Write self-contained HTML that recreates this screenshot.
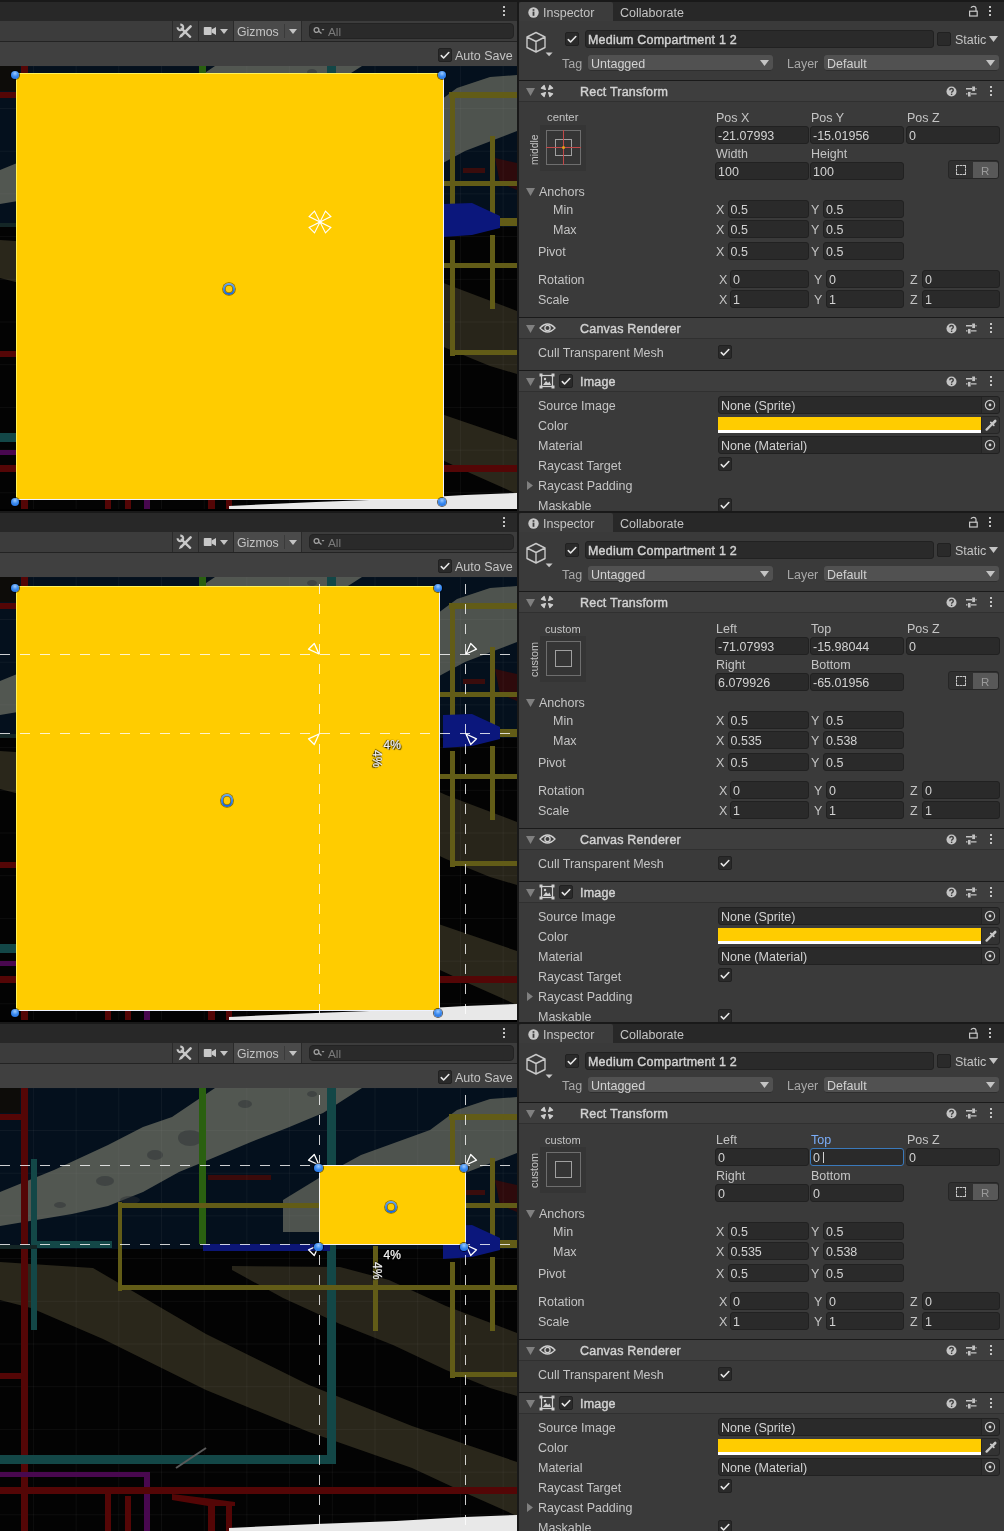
<!DOCTYPE html>
<html><head><meta charset="utf-8"><style>
html,body{margin:0;padding:0;width:1004px;height:1531px;overflow:hidden;background:#191919}
.p{position:absolute;left:0;width:1004px;height:511px;overflow:hidden;will-change:transform;background:#191919}
.r{position:absolute}
.t{position:absolute;white-space:nowrap;font-family:"Liberation Sans",sans-serif;line-height:normal}
</style></head><body>
<div class="p" style="top:0px"><div class="r" style="left:0px;top:0px;width:1004px;height:2px;background:#191919;"></div><div class="r" style="left:0px;top:2px;width:517px;height:19px;background:#282828;"></div><div class="r" style="left:502.8px;top:6.0px;width:2.3px;height:2.3px;background:#c4c4c4;"></div><div class="r" style="left:502.8px;top:9.9px;width:2.3px;height:2.3px;background:#c4c4c4;"></div><div class="r" style="left:502.8px;top:13.8px;width:2.3px;height:2.3px;background:#c4c4c4;"></div><div class="r" style="left:0px;top:21px;width:517px;height:20px;background:#3c3c3c;"></div><div class="r" style="left:0px;top:41px;width:517px;height:1px;background:#232323;"></div><div class="r" style="left:0px;top:42px;width:517px;height:24px;background:#404040;"></div><div class="r" style="left:172px;top:21px;width:1px;height:20px;background:#2a2a2a;"></div><div class="r" style="left:198px;top:21px;width:1px;height:20px;background:#2a2a2a;"></div><div class="r" style="left:233px;top:21px;width:1px;height:20px;background:#2a2a2a;"></div><div class="r" style="left:234px;top:21px;width:67px;height:20px;background:#4a4a4a;"></div><div class="r" style="left:284px;top:24px;width:1px;height:14px;background:#3a3a3a;"></div><div class="r" style="left:301px;top:21px;width:1px;height:20px;background:#2a2a2a;"></div><svg class="r" style="left:176px;top:23px" width="17" height="16" viewBox="0 0 17 16"><path d="M5.6 5.6 L14.2 13.8" stroke="#c8c8c8" stroke-width="2.3" stroke-linecap="round"/><path d="M4.3 1.6 A2.8 2.8 0 1 1 1.6 4.3" fill="none" stroke="#c8c8c8" stroke-width="2.1"/><path d="M14.6 3.4 L5.4 12.6" stroke="#c8c8c8" stroke-width="2.6" stroke-linecap="round"/><path d="M4.3 11.5 L6.5 13.7 L2.7 15.2 Z" fill="#c8c8c8"/></svg><svg class="r" style="left:203px;top:26px" width="14" height="10" viewBox="0 0 14 10"><rect x="0.8" y="1" width="7.8" height="8" rx="0.8" fill="#c8c8c8"/><path d="M8.6 3.6 L13 1 L13 9 L8.6 6.4 Z" fill="#c8c8c8"/></svg><svg class="r" style="left:220.0px;top:28.5px" width="8" height="5"><path d="M0 0 L8 0 L4.0 5 Z" fill="#c4c4c4"/></svg><div class="t" style="left:237px;top:24.87px;font-size:12.3px;color:#c4c4c4;">Gizmos</div><svg class="r" style="left:289.0px;top:28.5px" width="8" height="5"><path d="M0 0 L8 0 L4.0 5 Z" fill="#c4c4c4"/></svg><div class="r" style="left:309px;top:23px;width:205px;height:16px;background:#2a2a2a;border:1px solid #232323;box-sizing:border-box;border-radius:4px"></div><svg class="r" style="left:313px;top:26px" width="12" height="10" viewBox="0 0 12 10"><circle cx="3.5" cy="4" r="2.4" fill="none" stroke="#a0a0a0" stroke-width="1.3"/><path d="M5.5 5 L8.5 7.5" stroke="#a0a0a0" stroke-width="1.4"/><path d="M8.5 3 L11.5 3 L10 4.8 Z" fill="#a0a0a0"/></svg><div class="t" style="left:328px;top:24.82px;font-size:11.8px;color:#7a7a7a;">All</div><div class="r" style="left:438px;top:48px;width:12px;height:12px;background:#2a2a2a;border:1px solid #212121;border-radius:2px"></div><svg class="r" style="left:438px;top:48px" width="14" height="14" viewBox="0 0 14 14"><path d="M3.3 7.6 L5.6 10 L10.8 4.5" fill="none" stroke="#e6e6e6" stroke-width="1.6" stroke-linecap="round" stroke-linejoin="round"/></svg><div class="t" style="left:455px;top:48.99px;font-size:12.5px;color:#c4c4c4;">Auto Save</div><div class="r" style="left:517px;top:0px;width:2px;height:511px;background:#191919;"></div><div class="r" style="left:0;top:66px;width:517px;height:443px;overflow:hidden;background:#050709"><svg class="r" style="left:0;top:0" width="517" height="443"><rect x="0" y="0" width="517" height="443" fill="#030303" /><rect x="0" y="0" width="517" height="161" fill="#04101d" /><polygon points="0,104 54,82 108,57 143,39 172,29 215,0 362,0 323,25 287,40 251,54 201,75 179,84 143,104 108,118 72,126 0,138" fill="#525751" /><ellipse cx="105" cy="93" rx="9" ry="5" fill="#2a2f33" opacity="0.45"/><ellipse cx="155" cy="67" rx="8" ry="5" fill="#2a2f33" opacity="0.45"/><ellipse cx="190" cy="50" rx="12" ry="8" fill="#2a2f33" opacity="0.45"/><ellipse cx="245" cy="16" rx="7" ry="4" fill="#2a2f33" opacity="0.45"/><ellipse cx="60" cy="117" rx="6" ry="3" fill="#2a2f33" opacity="0.45"/><ellipse cx="130" cy="112" rx="10" ry="4" fill="#2a2f33" opacity="0.45"/><ellipse cx="312" cy="6" rx="5" ry="3" fill="#2a2f33" opacity="0.45"/><polygon points="283,144 283,112 319,90 361,67 430,42 457,22 490,11 517,9 517,65 465,85 430,104 319,144" fill="#4e534e" /><polygon points="232,178 340,179 389,192 446,218 517,245 517,308 490,300 446,282 393,257 340,236 283,210 232,182" fill="#28251a" /><polygon points="0,174 93,180 206,246 309,297 412,338 517,374 517,428 470,407 412,380 309,344 206,302 103,251 31,220 0,212" fill="#2a271b" /><rect x="463" y="102" width="22" height="5" fill="#3a0c0c" /><polygon points="495,92 517,97 517,124 500,117" fill="#2e0a0c" /><rect x="208" y="87" width="63" height="5" fill="#3a0a0a" /><line x1="33.4" y1="0" x2="33.4" y2="443" stroke="rgba(150,150,150,0.08)" stroke-width="1"/><line x1="76.1" y1="0" x2="76.1" y2="443" stroke="rgba(150,150,150,0.08)" stroke-width="1"/><line x1="118.8" y1="0" x2="118.8" y2="443" stroke="rgba(150,150,150,0.08)" stroke-width="1"/><line x1="161.5" y1="0" x2="161.5" y2="443" stroke="rgba(150,150,150,0.08)" stroke-width="1"/><line x1="204.2" y1="0" x2="204.2" y2="443" stroke="rgba(150,150,150,0.08)" stroke-width="1"/><line x1="246.9" y1="0" x2="246.9" y2="443" stroke="rgba(150,150,150,0.08)" stroke-width="1"/><line x1="289.6" y1="0" x2="289.6" y2="443" stroke="rgba(150,150,150,0.08)" stroke-width="1"/><line x1="332.3" y1="0" x2="332.3" y2="443" stroke="rgba(150,150,150,0.08)" stroke-width="1"/><line x1="375.0" y1="0" x2="375.0" y2="443" stroke="rgba(150,150,150,0.08)" stroke-width="1"/><line x1="417.7" y1="0" x2="417.7" y2="443" stroke="rgba(150,150,150,0.08)" stroke-width="1"/><line x1="460.4" y1="0" x2="460.4" y2="443" stroke="rgba(150,150,150,0.08)" stroke-width="1"/><line x1="503.1" y1="0" x2="503.1" y2="443" stroke="rgba(150,150,150,0.08)" stroke-width="1"/><line x1="545.8" y1="0" x2="545.8" y2="443" stroke="rgba(150,150,150,0.08)" stroke-width="1"/><line x1="0" y1="-0.2" x2="517" y2="-0.2" stroke="rgba(150,150,150,0.08)" stroke-width="1"/><line x1="0" y1="42.5" x2="517" y2="42.5" stroke="rgba(150,150,150,0.08)" stroke-width="1"/><line x1="0" y1="85.2" x2="517" y2="85.2" stroke="rgba(150,150,150,0.08)" stroke-width="1"/><line x1="0" y1="127.9" x2="517" y2="127.9" stroke="rgba(150,150,150,0.08)" stroke-width="1"/><line x1="0" y1="170.6" x2="517" y2="170.6" stroke="rgba(150,150,150,0.08)" stroke-width="1"/><line x1="0" y1="213.3" x2="517" y2="213.3" stroke="rgba(150,150,150,0.08)" stroke-width="1"/><line x1="0" y1="256.0" x2="517" y2="256.0" stroke="rgba(150,150,150,0.08)" stroke-width="1"/><line x1="0" y1="298.7" x2="517" y2="298.7" stroke="rgba(150,150,150,0.08)" stroke-width="1"/><line x1="0" y1="341.4" x2="517" y2="341.4" stroke="rgba(150,150,150,0.08)" stroke-width="1"/><line x1="0" y1="384.1" x2="517" y2="384.1" stroke="rgba(150,150,150,0.08)" stroke-width="1"/><line x1="0" y1="426.8" x2="517" y2="426.8" stroke="rgba(150,150,150,0.08)" stroke-width="1"/><line x1="0" y1="469.5" x2="517" y2="469.5" stroke="rgba(150,150,150,0.08)" stroke-width="1"/><rect x="21" y="0" width="7" height="443" fill="#540606" /><rect x="0" y="26" width="28" height="6" fill="#540606" /><rect x="0" y="285" width="28" height="6" fill="#540606" /><rect x="0" y="0" width="20" height="25" fill="#0d0c09" /><rect x="31" y="71" width="6" height="171" fill="#134747" /><rect x="37" y="153" width="75" height="7" fill="#134747" /><rect x="0" y="157" width="37" height="4" fill="#142626" /><rect x="327" y="0" width="9" height="376" fill="#134747" /><rect x="0" y="367" width="336" height="9" fill="#134747" /><rect x="199" y="0" width="7" height="156" fill="#2a6010" /><rect x="118" y="115" width="399" height="5" fill="#625c17" /><rect x="118" y="114" width="4" height="89" fill="#625c17" /><rect x="118" y="197" width="399" height="5" fill="#625c17" /><rect x="373" y="158" width="5" height="85" fill="#625c17" /><rect x="450" y="26" width="5" height="112" fill="#625c17" /><rect x="450" y="174" width="5" height="116" fill="#625c17" /><rect x="449" y="26" width="68" height="6" fill="#625c17" /><rect x="450" y="284" width="67" height="5" fill="#625c17" /><rect x="490" y="70" width="5" height="81" fill="#625c17" /><rect x="490" y="169" width="5" height="74" fill="#625c17" /><rect x="500" y="152" width="17" height="8" fill="#625c17" /><rect x="203" y="156" width="127" height="7" fill="#0c1676" /><polygon points="443,138 472,137 500,150 500,162 472,169 443,171" fill="#0b177c" /><rect x="0" y="384" width="150" height="5" fill="#48084f" /><rect x="144" y="384" width="6" height="59" fill="#48084f" /><rect x="0" y="399" width="517" height="7" fill="#540606" /><rect x="105" y="406" width="6" height="37" fill="#540606" /><rect x="125" y="408" width="6" height="35" fill="#540606" /><polygon points="172,406 205,410 235,414 235,418 215,418 215,443 208,443 208,418 172,412" fill="#540606" /><rect x="226" y="418" width="6" height="25" fill="#540606" /><line x1="176" y1="380" x2="206" y2="360" stroke="#5a5a5a" stroke-width="2"/><polygon points="229,443 229,440 316,436 396,433 465,429 517,427 517,443" fill="#e8e8e8" /></svg><div class="r" style="left:16px;top:7px;width:428px;height:427px;background:#ffcc00;box-shadow:inset 1px 1px 0 #fff25a, inset -1px -1px 0 #eef2ff"></div><div class="r" style="left:10.7px;top:4.7px;width:8.6px;height:8.6px;border-radius:50%;background:radial-gradient(circle at 50% 30%, #9ccaff 0%, #3d8cf0 45%, #1565dc 100%);box-shadow:0 0 0 1px rgba(0,0,0,0.6)"></div><div class="r" style="left:437.7px;top:4.7px;width:8.6px;height:8.6px;border-radius:50%;background:radial-gradient(circle at 50% 30%, #9ccaff 0%, #3d8cf0 45%, #1565dc 100%);box-shadow:0 0 0 1px rgba(0,0,0,0.6)"></div><div class="r" style="left:10.7px;top:431.7px;width:8.6px;height:8.6px;border-radius:50%;background:radial-gradient(circle at 50% 30%, #9ccaff 0%, #3d8cf0 45%, #1565dc 100%);box-shadow:0 0 0 1px rgba(0,0,0,0.6)"></div><div class="r" style="left:437.7px;top:431.7px;width:8.6px;height:8.6px;border-radius:50%;background:radial-gradient(circle at 50% 30%, #9ccaff 0%, #3d8cf0 45%, #1565dc 100%);box-shadow:0 0 0 1px rgba(0,0,0,0.6)"></div><div class="r" style="left:222.8px;top:216.8px;width:12.4px;height:12.4px;border-radius:50%;box-sizing:border-box;border:2.3px solid transparent;background:linear-gradient(#ffcc00,#ffcc00) padding-box, linear-gradient(180deg,#62a6ff,#0d62e0) border-box;box-shadow:0 0 0 0.8px rgba(40,30,0,0.55), inset 0 0 0 0.8px rgba(40,30,0,0.5)"></div><svg class="r" style="left:305.6px;top:142.2px" width="28" height="28" viewBox="0 0 28 28"><g fill="none" stroke="#ffffff" stroke-width="1.1"><path d="M14 14 L24.9 19.5 L19.5 24.9 Z"/><path d="M14 14 L8.5 24.9 L3.1 19.5 Z"/><path d="M14 14 L3.1 8.5 L8.5 3.1 Z"/><path d="M14 14 L19.5 3.1 L24.9 8.5 Z"/><circle cx="14" cy="14" r="0.8" fill="#fff"/></g></svg></div><div class="r" style="left:0px;top:509px;width:517px;height:2px;background:#000000;"></div><div class="r" style="left:519px;top:2px;width:485px;height:19px;background:#282828;"></div><div class="r" style="left:519px;top:2px;width:94px;height:19px;background:#3c3c3c;border-radius:2px 2px 0 0"></div><svg class="r" style="left:528px;top:7px" width="11" height="11" viewBox="0 0 11 11"><circle cx="5.5" cy="5.5" r="5.2" fill="#c8c8c8"/><rect x="4.6" y="2.2" width="1.8" height="1.6" fill="#3c3c3c"/><rect x="4.6" y="4.6" width="1.8" height="4.2" fill="#3c3c3c"/></svg><div class="t" style="left:543px;top:5.69px;font-size:12.5px;color:#c4c4c4;">Inspector</div><div class="t" style="left:620px;top:5.69px;font-size:12.5px;color:#c4c4c4;">Collaborate</div><svg class="r" style="left:968px;top:5px" width="11" height="12" viewBox="0 0 11 12"><rect x="1.6" y="6.2" width="7.6" height="4.8" fill="none" stroke="#c8c8c8" stroke-width="1.2"/><path d="M8 6.2 V3.6 Q8 1.4 5.7 1.4 Q3.6 1.4 3 2.9" fill="none" stroke="#c8c8c8" stroke-width="1.2"/></svg><div class="r" style="left:989px;top:6.0px;width:2.3px;height:2.3px;background:#c4c4c4;"></div><div class="r" style="left:989px;top:9.9px;width:2.3px;height:2.3px;background:#c4c4c4;"></div><div class="r" style="left:989px;top:13.8px;width:2.3px;height:2.3px;background:#c4c4c4;"></div><div class="r" style="left:519px;top:21px;width:485px;height:490px;background:#3a3a3a;"></div><svg class="r" style="left:525px;top:31px" width="30" height="28" viewBox="0 0 30 28"><path d="M11 1.5 L20 6 L20 16.5 L11 21 L2 16.5 L2 6 Z M2 6 L11 10.5 L20 6 M11 10.5 L11 21" fill="none" stroke="#c8c8c8" stroke-width="1.4" stroke-linejoin="round"/><path d="M20.6 21.6 L27.6 21.6 L24.1 25.2 Z" fill="#c8c8c8"/></svg><div class="r" style="left:565px;top:32px;width:12px;height:12px;background:#2a2a2a;border:1px solid #212121;border-radius:2px"></div><svg class="r" style="left:565px;top:32px" width="14" height="14" viewBox="0 0 14 14"><path d="M3.3 7.6 L5.6 10 L10.8 4.5" fill="none" stroke="#e6e6e6" stroke-width="1.6" stroke-linecap="round" stroke-linejoin="round"/></svg><div class="r" style="left:585px;top:30px;width:347px;height:16px;background:#2a2a2a;border:1px solid #212121;border-radius:3px"></div><div class="t" style="left:588px;top:32.69px;font-size:12.5px;color:#d2d2d2;letter-spacing:0.2px;-webkit-text-stroke:0.4px #d2d2d2;">Medium Compartment 1 2</div><div class="r" style="left:937px;top:32px;width:12px;height:12px;background:#2a2a2a;border:1px solid #212121;border-radius:2px"></div><div class="t" style="left:955px;top:32.69px;font-size:12.5px;color:#c4c4c4;">Static</div><svg class="r" style="left:988.5px;top:36.0px" width="9" height="6"><path d="M0 0 L9 0 L4.5 6 Z" fill="#c4c4c4"/></svg><div class="t" style="left:562px;top:56.69px;font-size:12.5px;color:#a8a8a8;">Tag</div><div class="r" style="left:588px;top:55px;width:185px;height:16px;background:#515151;border-radius:3px;box-shadow:inset 0 -1px 0 #2e2e2e"></div><div class="t" style="left:591px;top:56.69px;font-size:12.5px;color:#d2d2d2;">Untagged</div><svg class="r" style="left:759.5px;top:60.0px" width="9" height="6"><path d="M0 0 L9 0 L4.5 6 Z" fill="#c4c4c4"/></svg><div class="t" style="left:787px;top:56.69px;font-size:12.5px;color:#a8a8a8;">Layer</div><div class="r" style="left:824px;top:55px;width:175px;height:16px;background:#515151;border-radius:3px;box-shadow:inset 0 -1px 0 #2e2e2e"></div><div class="t" style="left:827px;top:56.69px;font-size:12.5px;color:#d2d2d2;">Default</div><svg class="r" style="left:985.5px;top:60.0px" width="9" height="6"><path d="M0 0 L9 0 L4.5 6 Z" fill="#c4c4c4"/></svg><div class="r" style="left:519px;top:80px;width:485px;height:1px;background:#1a1a1a;"></div><div class="r" style="left:519px;top:81px;width:485px;height:20px;background:#3e3e3e;"></div><div class="r" style="left:519px;top:101px;width:485px;height:1px;background:#303030;"></div><svg class="r" style="left:525.5px;top:88.0px" width="9" height="8"><path d="M0 0 L9 0 L4.5 8 Z" fill="#808080"/></svg><svg class="r" style="left:540px;top:84px" width="14" height="14" viewBox="0 0 14 14"><path d="M5.44 5.44 L4.17 1.34 L1.34 4.17 Z M8.56 5.44 L12.66 4.17 L9.83 1.34 Z M5.44 8.56 L1.34 9.83 L4.17 12.66 Z M8.56 8.56 L9.83 12.66 L12.66 9.83 Z " fill="#d0d0d0" stroke="#d0d0d0" stroke-width="1.1" stroke-linejoin="round"/></svg><div class="t" style="left:580px;top:84.69px;font-size:12.5px;color:#d2d2d2;letter-spacing:0.2px;-webkit-text-stroke:0.4px #d2d2d2;">Rect Transform</div><svg class="r" style="left:945.5px;top:85.7px" width="11" height="11" viewBox="0 0 11 11"><circle cx="5.5" cy="5.5" r="5" fill="#c4c4c4"/><path d="M3.7 4.3 Q3.8 2.5 5.5 2.5 Q7.3 2.5 7.3 4.1 Q7.3 5.1 6.2 5.6 Q5.6 5.9 5.6 6.7" fill="none" stroke="#3e3e3e" stroke-width="1.4"/><rect x="4.9" y="7.6" width="1.4" height="1.4" fill="#3e3e3e"/></svg><svg class="r" style="left:965px;top:85.5px" width="13" height="12" viewBox="0 0 13 12"><path d="M1 2.8 H7 M10.5 2.8 H11.5 M1 7.9 H2.5 M6 7.9 H11.5" stroke="#c4c4c4" stroke-width="1.4"/><rect x="7.2" y="0.5" width="2.8" height="4.6" fill="#c4c4c4"/><rect x="3" y="5.9" width="2.6" height="4.6" fill="#c4c4c4"/></svg><div class="r" style="left:989.8px;top:86.0px;width:2.3px;height:2.3px;background:#c4c4c4;"></div><div class="r" style="left:989.8px;top:89.9px;width:2.3px;height:2.3px;background:#c4c4c4;"></div><div class="r" style="left:989.8px;top:93.8px;width:2.3px;height:2.3px;background:#c4c4c4;"></div><div class="t" style="left:547px;top:110.77px;font-size:11.3px;color:#c4c4c4;">center</div><div class="t" style="left:0px;top:-9.41px;font-size:10.4px;color:#c4c4c4;left:529px;top:164.5px;transform-origin:0 0;transform:rotate(-90deg)">middle</div><div class="r" style="left:540px;top:125px;width:46px;height:46px;background:#353535;"></div><div class="r" style="left:546px;top:130px;width:35px;height:35px;background:transparent;border:1px solid #6e6e6e;box-sizing:border-box"></div><div class="r" style="left:555px;top:139px;width:17px;height:17px;background:transparent;border:1px solid #a0a0a0;box-sizing:border-box"></div><div class="r" style="left:563px;top:130px;width:1px;height:35px;background:#c04848;"></div><div class="r" style="left:546px;top:147px;width:35px;height:1px;background:#c04848;"></div><div class="r" style="left:562px;top:146px;width:3px;height:3px;background:#e8a010;border-radius:50%"></div><div class="t" style="left:716px;top:110.69px;font-size:12.5px;color:#c4c4c4;">Pos X</div><div class="r" style="left:715px;top:126px;width:92px;height:16px;background:#2a2a2a;border:1px solid #212121;border-radius:3px"></div><div class="t" style="left:718px;top:128.69px;font-size:12.5px;color:#d2d2d2;">-21.07993</div><div class="t" style="left:811px;top:110.69px;font-size:12.5px;color:#c4c4c4;">Pos Y</div><div class="r" style="left:810px;top:126px;width:92px;height:16px;background:#2a2a2a;border:1px solid #212121;border-radius:3px"></div><div class="t" style="left:813px;top:128.69px;font-size:12.5px;color:#d2d2d2;">-15.01956</div><div class="t" style="left:907px;top:110.69px;font-size:12.5px;color:#c4c4c4;">Pos Z</div><div class="r" style="left:906px;top:126px;width:92px;height:16px;background:#2a2a2a;border:1px solid #212121;border-radius:3px"></div><div class="t" style="left:909px;top:128.69px;font-size:12.5px;color:#d2d2d2;">0</div><div class="t" style="left:716px;top:146.69px;font-size:12.5px;color:#c4c4c4;">Width</div><div class="r" style="left:715px;top:162px;width:92px;height:16px;background:#2a2a2a;border:1px solid #212121;border-radius:3px"></div><div class="t" style="left:718px;top:164.69px;font-size:12.5px;color:#d2d2d2;">100</div><div class="t" style="left:811px;top:146.69px;font-size:12.5px;color:#c4c4c4;">Height</div><div class="r" style="left:810px;top:162px;width:92px;height:16px;background:#2a2a2a;border:1px solid #212121;border-radius:3px"></div><div class="t" style="left:813px;top:164.69px;font-size:12.5px;color:#d2d2d2;">100</div><div class="r" style="left:948px;top:160px;width:51px;height:19px;background:#303030;border:1px solid #262626;box-sizing:border-box;border-radius:3px"></div><div class="r" style="left:973px;top:162px;width:25px;height:16px;background:#585858;border-radius:0 2px 2px 0"></div><div class="r" style="left:956px;top:165px;width:10px;height:10px;background:transparent;border:1px dashed #c4c4c4;box-sizing:border-box"></div><div class="t" style="left:981px;top:164.59px;font-size:11.5px;color:#9a9a9a;">R</div><svg class="r" style="left:525.5px;top:188.0px" width="9" height="8"><path d="M0 0 L9 0 L4.5 8 Z" fill="#808080"/></svg><div class="t" style="left:539px;top:184.69px;font-size:12.5px;color:#c4c4c4;">Anchors</div><div class="t" style="left:553px;top:202.69px;font-size:12.5px;color:#c4c4c4;">Min</div><div class="t" style="left:553px;top:222.69px;font-size:12.5px;color:#c4c4c4;">Max</div><div class="t" style="left:538px;top:244.69px;font-size:12.5px;color:#c4c4c4;">Pivot</div><div class="t" style="left:716px;top:203.29px;font-size:12.5px;color:#c4c4c4;">X</div><div class="r" style="left:727.5px;top:200px;width:79px;height:16px;background:#2a2a2a;border:1px solid #212121;border-radius:3px"></div><div class="t" style="left:730.5px;top:202.69px;font-size:12.5px;color:#d2d2d2;">0.5</div><div class="t" style="left:811px;top:203.29px;font-size:12.5px;color:#c4c4c4;">Y</div><div class="r" style="left:823px;top:200px;width:79px;height:16px;background:#2a2a2a;border:1px solid #212121;border-radius:3px"></div><div class="t" style="left:826px;top:202.69px;font-size:12.5px;color:#d2d2d2;">0.5</div><div class="t" style="left:716px;top:223.29px;font-size:12.5px;color:#c4c4c4;">X</div><div class="r" style="left:727.5px;top:220px;width:79px;height:16px;background:#2a2a2a;border:1px solid #212121;border-radius:3px"></div><div class="t" style="left:730.5px;top:222.69px;font-size:12.5px;color:#d2d2d2;">0.5</div><div class="t" style="left:811px;top:223.29px;font-size:12.5px;color:#c4c4c4;">Y</div><div class="r" style="left:823px;top:220px;width:79px;height:16px;background:#2a2a2a;border:1px solid #212121;border-radius:3px"></div><div class="t" style="left:826px;top:222.69px;font-size:12.5px;color:#d2d2d2;">0.5</div><div class="t" style="left:716px;top:245.29px;font-size:12.5px;color:#c4c4c4;">X</div><div class="r" style="left:727.5px;top:242px;width:79px;height:16px;background:#2a2a2a;border:1px solid #212121;border-radius:3px"></div><div class="t" style="left:730.5px;top:244.69px;font-size:12.5px;color:#d2d2d2;">0.5</div><div class="t" style="left:811px;top:245.29px;font-size:12.5px;color:#c4c4c4;">Y</div><div class="r" style="left:823px;top:242px;width:79px;height:16px;background:#2a2a2a;border:1px solid #212121;border-radius:3px"></div><div class="t" style="left:826px;top:244.69px;font-size:12.5px;color:#d2d2d2;">0.5</div><div class="t" style="left:538px;top:272.69px;font-size:12.5px;color:#c4c4c4;">Rotation</div><div class="t" style="left:538px;top:292.69px;font-size:12.5px;color:#c4c4c4;">Scale</div><div class="t" style="left:719px;top:273.29px;font-size:12.5px;color:#c4c4c4;">X</div><div class="r" style="left:730px;top:270px;width:77px;height:16px;background:#2a2a2a;border:1px solid #212121;border-radius:3px"></div><div class="t" style="left:733px;top:272.69px;font-size:12.5px;color:#d2d2d2;">0</div><div class="t" style="left:814px;top:273.29px;font-size:12.5px;color:#c4c4c4;">Y</div><div class="r" style="left:826px;top:270px;width:76px;height:16px;background:#2a2a2a;border:1px solid #212121;border-radius:3px"></div><div class="t" style="left:829px;top:272.69px;font-size:12.5px;color:#d2d2d2;">0</div><div class="t" style="left:910px;top:273.29px;font-size:12.5px;color:#c4c4c4;">Z</div><div class="r" style="left:922px;top:270px;width:76px;height:16px;background:#2a2a2a;border:1px solid #212121;border-radius:3px"></div><div class="t" style="left:925px;top:272.69px;font-size:12.5px;color:#d2d2d2;">0</div><div class="t" style="left:719px;top:293.29px;font-size:12.5px;color:#c4c4c4;">X</div><div class="r" style="left:730px;top:290px;width:77px;height:16px;background:#2a2a2a;border:1px solid #212121;border-radius:3px"></div><div class="t" style="left:733px;top:292.69px;font-size:12.5px;color:#d2d2d2;">1</div><div class="t" style="left:814px;top:293.29px;font-size:12.5px;color:#c4c4c4;">Y</div><div class="r" style="left:826px;top:290px;width:76px;height:16px;background:#2a2a2a;border:1px solid #212121;border-radius:3px"></div><div class="t" style="left:829px;top:292.69px;font-size:12.5px;color:#d2d2d2;">1</div><div class="t" style="left:910px;top:293.29px;font-size:12.5px;color:#c4c4c4;">Z</div><div class="r" style="left:922px;top:290px;width:76px;height:16px;background:#2a2a2a;border:1px solid #212121;border-radius:3px"></div><div class="t" style="left:925px;top:292.69px;font-size:12.5px;color:#d2d2d2;">1</div><div class="r" style="left:519px;top:317px;width:485px;height:1px;background:#1a1a1a;"></div><div class="r" style="left:519px;top:318px;width:485px;height:20px;background:#3e3e3e;"></div><div class="r" style="left:519px;top:338px;width:485px;height:1px;background:#303030;"></div><svg class="r" style="left:525.5px;top:325.0px" width="9" height="8"><path d="M0 0 L9 0 L4.5 8 Z" fill="#808080"/></svg><svg class="r" style="left:539px;top:322px" width="17" height="12" viewBox="0 0 17 12"><path d="M1 6 Q8.5 -2 16 6 Q8.5 14 1 6 Z" fill="none" stroke="#d0d0d0" stroke-width="1.3"/><circle cx="8.5" cy="6" r="2.6" fill="none" stroke="#d0d0d0" stroke-width="1.3"/></svg><div class="t" style="left:580px;top:321.69px;font-size:12.5px;color:#d2d2d2;letter-spacing:0.2px;-webkit-text-stroke:0.4px #d2d2d2;">Canvas Renderer</div><svg class="r" style="left:945.5px;top:322.7px" width="11" height="11" viewBox="0 0 11 11"><circle cx="5.5" cy="5.5" r="5" fill="#c4c4c4"/><path d="M3.7 4.3 Q3.8 2.5 5.5 2.5 Q7.3 2.5 7.3 4.1 Q7.3 5.1 6.2 5.6 Q5.6 5.9 5.6 6.7" fill="none" stroke="#3e3e3e" stroke-width="1.4"/><rect x="4.9" y="7.6" width="1.4" height="1.4" fill="#3e3e3e"/></svg><svg class="r" style="left:965px;top:322.5px" width="13" height="12" viewBox="0 0 13 12"><path d="M1 2.8 H7 M10.5 2.8 H11.5 M1 7.9 H2.5 M6 7.9 H11.5" stroke="#c4c4c4" stroke-width="1.4"/><rect x="7.2" y="0.5" width="2.8" height="4.6" fill="#c4c4c4"/><rect x="3" y="5.9" width="2.6" height="4.6" fill="#c4c4c4"/></svg><div class="r" style="left:989.8px;top:323.0px;width:2.3px;height:2.3px;background:#c4c4c4;"></div><div class="r" style="left:989.8px;top:326.9px;width:2.3px;height:2.3px;background:#c4c4c4;"></div><div class="r" style="left:989.8px;top:330.8px;width:2.3px;height:2.3px;background:#c4c4c4;"></div><div class="t" style="left:538px;top:345.69px;font-size:12.5px;color:#c4c4c4;">Cull Transparent Mesh</div><div class="r" style="left:718px;top:345px;width:12px;height:12px;background:#2a2a2a;border:1px solid #212121;border-radius:2px"></div><svg class="r" style="left:718px;top:345px" width="14" height="14" viewBox="0 0 14 14"><path d="M3.3 7.6 L5.6 10 L10.8 4.5" fill="none" stroke="#e6e6e6" stroke-width="1.6" stroke-linecap="round" stroke-linejoin="round"/></svg><div class="r" style="left:519px;top:370px;width:485px;height:1px;background:#1a1a1a;"></div><div class="r" style="left:519px;top:371px;width:485px;height:20px;background:#3e3e3e;"></div><div class="r" style="left:519px;top:391px;width:485px;height:1px;background:#303030;"></div><svg class="r" style="left:525.5px;top:378.0px" width="9" height="8"><path d="M0 0 L9 0 L4.5 8 Z" fill="#808080"/></svg><svg class="r" style="left:539px;top:373px" width="16" height="16" viewBox="0 0 16 16"><rect x="2.5" y="2.5" width="11" height="11" fill="none" stroke="#d0d0d0" stroke-width="1.2"/><rect x="0.5" y="0.5" width="3" height="3" fill="#d0d0d0"/><rect x="12.5" y="0.5" width="3" height="3" fill="#d0d0d0"/><rect x="0.5" y="12.5" width="3" height="3" fill="#d0d0d0"/><rect x="12.5" y="12.5" width="3" height="3" fill="#d0d0d0"/><path d="M4 12 L7 8 L9 10 L10.5 8.5 L12 12 Z" fill="#d0d0d0"/><circle cx="6" cy="6" r="1.2" fill="#d0d0d0"/></svg><div class="r" style="left:559px;top:374px;width:12px;height:12px;background:#2a2a2a;border:1px solid #212121;border-radius:2px"></div><svg class="r" style="left:559px;top:374px" width="14" height="14" viewBox="0 0 14 14"><path d="M3.3 7.6 L5.6 10 L10.8 4.5" fill="none" stroke="#e6e6e6" stroke-width="1.6" stroke-linecap="round" stroke-linejoin="round"/></svg><div class="t" style="left:580px;top:374.69px;font-size:12.5px;color:#d2d2d2;letter-spacing:0.2px;-webkit-text-stroke:0.4px #d2d2d2;">Image</div><svg class="r" style="left:945.5px;top:375.7px" width="11" height="11" viewBox="0 0 11 11"><circle cx="5.5" cy="5.5" r="5" fill="#c4c4c4"/><path d="M3.7 4.3 Q3.8 2.5 5.5 2.5 Q7.3 2.5 7.3 4.1 Q7.3 5.1 6.2 5.6 Q5.6 5.9 5.6 6.7" fill="none" stroke="#3e3e3e" stroke-width="1.4"/><rect x="4.9" y="7.6" width="1.4" height="1.4" fill="#3e3e3e"/></svg><svg class="r" style="left:965px;top:375.5px" width="13" height="12" viewBox="0 0 13 12"><path d="M1 2.8 H7 M10.5 2.8 H11.5 M1 7.9 H2.5 M6 7.9 H11.5" stroke="#c4c4c4" stroke-width="1.4"/><rect x="7.2" y="0.5" width="2.8" height="4.6" fill="#c4c4c4"/><rect x="3" y="5.9" width="2.6" height="4.6" fill="#c4c4c4"/></svg><div class="r" style="left:989.8px;top:376.0px;width:2.3px;height:2.3px;background:#c4c4c4;"></div><div class="r" style="left:989.8px;top:379.9px;width:2.3px;height:2.3px;background:#c4c4c4;"></div><div class="r" style="left:989.8px;top:383.8px;width:2.3px;height:2.3px;background:#c4c4c4;"></div><div class="t" style="left:538px;top:398.89px;font-size:12.5px;color:#c4c4c4;">Source Image</div><div class="r" style="left:718px;top:396px;width:280px;height:16px;background:#2a2a2a;border:1px solid #212121;border-radius:3px"></div><div class="t" style="left:721px;top:398.69px;font-size:12.5px;color:#d2d2d2;">None (Sprite)</div><div class="r" style="left:981px;top:397px;width:18px;height:16px;background:#2f2f2f;border-radius:0 2px 2px 0"></div><div class="r" style="left:981px;top:397px;width:1px;height:16px;background:#232323;"></div><svg class="r" style="left:984px;top:399px" width="12" height="12" viewBox="0 0 12 12"><circle cx="6" cy="6" r="4.6" fill="none" stroke="#c8c8c8" stroke-width="1.2"/><circle cx="6" cy="6" r="1.4" fill="#d0d0d0"/></svg><div class="t" style="left:538px;top:418.89px;font-size:12.5px;color:#c4c4c4;">Color</div><div class="r" style="left:718px;top:417px;width:263px;height:13px;background:#ffcc00;"></div><div class="r" style="left:718px;top:430px;width:263px;height:3px;background:#ffffff;"></div><div class="r" style="left:981px;top:416px;width:19px;height:18px;background:#333333;border:1px solid #262626;box-sizing:border-box;border-radius:0 3px 3px 0"></div><svg class="r" style="left:984px;top:418px" width="14" height="14" viewBox="0 0 14 14"><path d="M2.6 11.6 L8.2 6" stroke="#c8c8c8" stroke-width="2.4" stroke-linecap="round"/><path d="M6.8 4.4 L9.8 7.4" stroke="#c8c8c8" stroke-width="1.8" stroke-linecap="round"/><path d="M8.6 5.6 L11.2 3" stroke="#c8c8c8" stroke-width="2.6" stroke-linecap="round"/></svg><div class="t" style="left:538px;top:438.69px;font-size:12.5px;color:#c4c4c4;">Material</div><div class="r" style="left:718px;top:436px;width:280px;height:16px;background:#2a2a2a;border:1px solid #212121;border-radius:3px"></div><div class="t" style="left:721px;top:438.69px;font-size:12.5px;color:#d2d2d2;">None (Material)</div><div class="r" style="left:981px;top:437px;width:18px;height:16px;background:#2f2f2f;border-radius:0 2px 2px 0"></div><div class="r" style="left:981px;top:437px;width:1px;height:16px;background:#232323;"></div><svg class="r" style="left:984px;top:439px" width="12" height="12" viewBox="0 0 12 12"><circle cx="6" cy="6" r="4.6" fill="none" stroke="#c8c8c8" stroke-width="1.2"/><circle cx="6" cy="6" r="1.4" fill="#d0d0d0"/></svg><div class="t" style="left:538px;top:458.69px;font-size:12.5px;color:#c4c4c4;">Raycast Target</div><div class="r" style="left:718px;top:457px;width:12px;height:12px;background:#2a2a2a;border:1px solid #212121;border-radius:2px"></div><svg class="r" style="left:718px;top:457px" width="14" height="14" viewBox="0 0 14 14"><path d="M3.3 7.6 L5.6 10 L10.8 4.5" fill="none" stroke="#e6e6e6" stroke-width="1.6" stroke-linecap="round" stroke-linejoin="round"/></svg><svg class="r" style="left:527.0px;top:480.5px" width="6" height="9"><path d="M0 0 L6 4.5 L0 9 Z" fill="#808080"/></svg><div class="t" style="left:538px;top:478.69px;font-size:12.5px;color:#c4c4c4;">Raycast Padding</div><div class="t" style="left:538px;top:498.69px;font-size:12.5px;color:#c4c4c4;">Maskable</div><div class="r" style="left:718px;top:498px;width:12px;height:12px;background:#2a2a2a;border:1px solid #212121;border-radius:2px"></div><svg class="r" style="left:718px;top:498px" width="14" height="14" viewBox="0 0 14 14"><path d="M3.3 7.6 L5.6 10 L10.8 4.5" fill="none" stroke="#e6e6e6" stroke-width="1.6" stroke-linecap="round" stroke-linejoin="round"/></svg></div><div class="p" style="top:511px"><div class="r" style="left:0px;top:0px;width:1004px;height:2px;background:#191919;"></div><div class="r" style="left:0px;top:2px;width:517px;height:19px;background:#282828;"></div><div class="r" style="left:502.8px;top:6.0px;width:2.3px;height:2.3px;background:#c4c4c4;"></div><div class="r" style="left:502.8px;top:9.9px;width:2.3px;height:2.3px;background:#c4c4c4;"></div><div class="r" style="left:502.8px;top:13.8px;width:2.3px;height:2.3px;background:#c4c4c4;"></div><div class="r" style="left:0px;top:21px;width:517px;height:20px;background:#3c3c3c;"></div><div class="r" style="left:0px;top:41px;width:517px;height:1px;background:#232323;"></div><div class="r" style="left:0px;top:42px;width:517px;height:24px;background:#404040;"></div><div class="r" style="left:172px;top:21px;width:1px;height:20px;background:#2a2a2a;"></div><div class="r" style="left:198px;top:21px;width:1px;height:20px;background:#2a2a2a;"></div><div class="r" style="left:233px;top:21px;width:1px;height:20px;background:#2a2a2a;"></div><div class="r" style="left:234px;top:21px;width:67px;height:20px;background:#4a4a4a;"></div><div class="r" style="left:284px;top:24px;width:1px;height:14px;background:#3a3a3a;"></div><div class="r" style="left:301px;top:21px;width:1px;height:20px;background:#2a2a2a;"></div><svg class="r" style="left:176px;top:23px" width="17" height="16" viewBox="0 0 17 16"><path d="M5.6 5.6 L14.2 13.8" stroke="#c8c8c8" stroke-width="2.3" stroke-linecap="round"/><path d="M4.3 1.6 A2.8 2.8 0 1 1 1.6 4.3" fill="none" stroke="#c8c8c8" stroke-width="2.1"/><path d="M14.6 3.4 L5.4 12.6" stroke="#c8c8c8" stroke-width="2.6" stroke-linecap="round"/><path d="M4.3 11.5 L6.5 13.7 L2.7 15.2 Z" fill="#c8c8c8"/></svg><svg class="r" style="left:203px;top:26px" width="14" height="10" viewBox="0 0 14 10"><rect x="0.8" y="1" width="7.8" height="8" rx="0.8" fill="#c8c8c8"/><path d="M8.6 3.6 L13 1 L13 9 L8.6 6.4 Z" fill="#c8c8c8"/></svg><svg class="r" style="left:220.0px;top:28.5px" width="8" height="5"><path d="M0 0 L8 0 L4.0 5 Z" fill="#c4c4c4"/></svg><div class="t" style="left:237px;top:24.87px;font-size:12.3px;color:#c4c4c4;">Gizmos</div><svg class="r" style="left:289.0px;top:28.5px" width="8" height="5"><path d="M0 0 L8 0 L4.0 5 Z" fill="#c4c4c4"/></svg><div class="r" style="left:309px;top:23px;width:205px;height:16px;background:#2a2a2a;border:1px solid #232323;box-sizing:border-box;border-radius:4px"></div><svg class="r" style="left:313px;top:26px" width="12" height="10" viewBox="0 0 12 10"><circle cx="3.5" cy="4" r="2.4" fill="none" stroke="#a0a0a0" stroke-width="1.3"/><path d="M5.5 5 L8.5 7.5" stroke="#a0a0a0" stroke-width="1.4"/><path d="M8.5 3 L11.5 3 L10 4.8 Z" fill="#a0a0a0"/></svg><div class="t" style="left:328px;top:24.82px;font-size:11.8px;color:#7a7a7a;">All</div><div class="r" style="left:438px;top:48px;width:12px;height:12px;background:#2a2a2a;border:1px solid #212121;border-radius:2px"></div><svg class="r" style="left:438px;top:48px" width="14" height="14" viewBox="0 0 14 14"><path d="M3.3 7.6 L5.6 10 L10.8 4.5" fill="none" stroke="#e6e6e6" stroke-width="1.6" stroke-linecap="round" stroke-linejoin="round"/></svg><div class="t" style="left:455px;top:48.99px;font-size:12.5px;color:#c4c4c4;">Auto Save</div><div class="r" style="left:517px;top:0px;width:2px;height:511px;background:#191919;"></div><div class="r" style="left:0;top:66px;width:517px;height:443px;overflow:hidden;background:#050709"><svg class="r" style="left:0;top:0" width="517" height="443"><rect x="0" y="0" width="517" height="443" fill="#030303" /><rect x="0" y="0" width="517" height="161" fill="#04101d" /><polygon points="0,104 54,82 108,57 143,39 172,29 215,0 362,0 323,25 287,40 251,54 201,75 179,84 143,104 108,118 72,126 0,138" fill="#525751" /><ellipse cx="105" cy="93" rx="9" ry="5" fill="#2a2f33" opacity="0.45"/><ellipse cx="155" cy="67" rx="8" ry="5" fill="#2a2f33" opacity="0.45"/><ellipse cx="190" cy="50" rx="12" ry="8" fill="#2a2f33" opacity="0.45"/><ellipse cx="245" cy="16" rx="7" ry="4" fill="#2a2f33" opacity="0.45"/><ellipse cx="60" cy="117" rx="6" ry="3" fill="#2a2f33" opacity="0.45"/><ellipse cx="130" cy="112" rx="10" ry="4" fill="#2a2f33" opacity="0.45"/><ellipse cx="312" cy="6" rx="5" ry="3" fill="#2a2f33" opacity="0.45"/><polygon points="283,144 283,112 319,90 361,67 430,42 457,22 490,11 517,9 517,65 465,85 430,104 319,144" fill="#4e534e" /><polygon points="232,178 340,179 389,192 446,218 517,245 517,308 490,300 446,282 393,257 340,236 283,210 232,182" fill="#28251a" /><polygon points="0,174 93,180 206,246 309,297 412,338 517,374 517,428 470,407 412,380 309,344 206,302 103,251 31,220 0,212" fill="#2a271b" /><rect x="463" y="102" width="22" height="5" fill="#3a0c0c" /><polygon points="495,92 517,97 517,124 500,117" fill="#2e0a0c" /><rect x="208" y="87" width="63" height="5" fill="#3a0a0a" /><line x1="33.4" y1="0" x2="33.4" y2="443" stroke="rgba(150,150,150,0.08)" stroke-width="1"/><line x1="76.1" y1="0" x2="76.1" y2="443" stroke="rgba(150,150,150,0.08)" stroke-width="1"/><line x1="118.8" y1="0" x2="118.8" y2="443" stroke="rgba(150,150,150,0.08)" stroke-width="1"/><line x1="161.5" y1="0" x2="161.5" y2="443" stroke="rgba(150,150,150,0.08)" stroke-width="1"/><line x1="204.2" y1="0" x2="204.2" y2="443" stroke="rgba(150,150,150,0.08)" stroke-width="1"/><line x1="246.9" y1="0" x2="246.9" y2="443" stroke="rgba(150,150,150,0.08)" stroke-width="1"/><line x1="289.6" y1="0" x2="289.6" y2="443" stroke="rgba(150,150,150,0.08)" stroke-width="1"/><line x1="332.3" y1="0" x2="332.3" y2="443" stroke="rgba(150,150,150,0.08)" stroke-width="1"/><line x1="375.0" y1="0" x2="375.0" y2="443" stroke="rgba(150,150,150,0.08)" stroke-width="1"/><line x1="417.7" y1="0" x2="417.7" y2="443" stroke="rgba(150,150,150,0.08)" stroke-width="1"/><line x1="460.4" y1="0" x2="460.4" y2="443" stroke="rgba(150,150,150,0.08)" stroke-width="1"/><line x1="503.1" y1="0" x2="503.1" y2="443" stroke="rgba(150,150,150,0.08)" stroke-width="1"/><line x1="545.8" y1="0" x2="545.8" y2="443" stroke="rgba(150,150,150,0.08)" stroke-width="1"/><line x1="0" y1="-0.2" x2="517" y2="-0.2" stroke="rgba(150,150,150,0.08)" stroke-width="1"/><line x1="0" y1="42.5" x2="517" y2="42.5" stroke="rgba(150,150,150,0.08)" stroke-width="1"/><line x1="0" y1="85.2" x2="517" y2="85.2" stroke="rgba(150,150,150,0.08)" stroke-width="1"/><line x1="0" y1="127.9" x2="517" y2="127.9" stroke="rgba(150,150,150,0.08)" stroke-width="1"/><line x1="0" y1="170.6" x2="517" y2="170.6" stroke="rgba(150,150,150,0.08)" stroke-width="1"/><line x1="0" y1="213.3" x2="517" y2="213.3" stroke="rgba(150,150,150,0.08)" stroke-width="1"/><line x1="0" y1="256.0" x2="517" y2="256.0" stroke="rgba(150,150,150,0.08)" stroke-width="1"/><line x1="0" y1="298.7" x2="517" y2="298.7" stroke="rgba(150,150,150,0.08)" stroke-width="1"/><line x1="0" y1="341.4" x2="517" y2="341.4" stroke="rgba(150,150,150,0.08)" stroke-width="1"/><line x1="0" y1="384.1" x2="517" y2="384.1" stroke="rgba(150,150,150,0.08)" stroke-width="1"/><line x1="0" y1="426.8" x2="517" y2="426.8" stroke="rgba(150,150,150,0.08)" stroke-width="1"/><line x1="0" y1="469.5" x2="517" y2="469.5" stroke="rgba(150,150,150,0.08)" stroke-width="1"/><rect x="21" y="0" width="7" height="443" fill="#540606" /><rect x="0" y="26" width="28" height="6" fill="#540606" /><rect x="0" y="285" width="28" height="6" fill="#540606" /><rect x="0" y="0" width="20" height="25" fill="#0d0c09" /><rect x="31" y="71" width="6" height="171" fill="#134747" /><rect x="37" y="153" width="75" height="7" fill="#134747" /><rect x="0" y="157" width="37" height="4" fill="#142626" /><rect x="327" y="0" width="9" height="376" fill="#134747" /><rect x="0" y="367" width="336" height="9" fill="#134747" /><rect x="199" y="0" width="7" height="156" fill="#2a6010" /><rect x="118" y="115" width="399" height="5" fill="#625c17" /><rect x="118" y="114" width="4" height="89" fill="#625c17" /><rect x="118" y="197" width="399" height="5" fill="#625c17" /><rect x="373" y="158" width="5" height="85" fill="#625c17" /><rect x="450" y="26" width="5" height="112" fill="#625c17" /><rect x="450" y="174" width="5" height="116" fill="#625c17" /><rect x="449" y="26" width="68" height="6" fill="#625c17" /><rect x="450" y="284" width="67" height="5" fill="#625c17" /><rect x="490" y="70" width="5" height="81" fill="#625c17" /><rect x="490" y="169" width="5" height="74" fill="#625c17" /><rect x="500" y="152" width="17" height="8" fill="#625c17" /><rect x="203" y="156" width="127" height="7" fill="#0c1676" /><polygon points="443,138 472,137 500,150 500,162 472,169 443,171" fill="#0b177c" /><rect x="0" y="384" width="150" height="5" fill="#48084f" /><rect x="144" y="384" width="6" height="59" fill="#48084f" /><rect x="0" y="399" width="517" height="7" fill="#540606" /><rect x="105" y="406" width="6" height="37" fill="#540606" /><rect x="125" y="408" width="6" height="35" fill="#540606" /><polygon points="172,406 205,410 235,414 235,418 215,418 215,443 208,443 208,418 172,412" fill="#540606" /><rect x="226" y="418" width="6" height="25" fill="#540606" /><line x1="176" y1="380" x2="206" y2="360" stroke="#5a5a5a" stroke-width="2"/><polygon points="229,443 229,440 316,436 396,433 465,429 517,427 517,443" fill="#e8e8e8" /></svg><div class="r" style="left:16px;top:9px;width:424px;height:425px;background:#ffcc00;box-shadow:inset 1px 1px 0 #fff25a, inset -1px -1px 0 #eef2ff"></div><div class="r" style="left:0px;top:77px;width:517px;height:1px;background:transparent;background:repeating-linear-gradient(90deg, rgba(255,255,255,0.8) 0 10px, transparent 10px 20px)"></div><div class="r" style="left:0px;top:156px;width:517px;height:1px;background:transparent;background:repeating-linear-gradient(90deg, rgba(255,255,255,0.8) 0 10px, transparent 10px 20px)"></div><div class="r" style="left:319px;top:0px;width:1px;height:443px;background:transparent;background:repeating-linear-gradient(180deg, transparent 0 7px, rgba(255,255,255,0.8) 7px 17px, transparent 17px 20px)"></div><div class="r" style="left:465px;top:0px;width:1px;height:443px;background:transparent;background:repeating-linear-gradient(180deg, transparent 0 7px, rgba(255,255,255,0.8) 7px 17px, transparent 17px 20px)"></div><svg class="r" style="left:0;top:0" width="517" height="443"><path d="M319.0 77.0 L308.5 72.2 L314.3 66.5 Z" fill="none" stroke="#ffffff" stroke-width="1.3" stroke-linejoin="round"/><path d="M466.0 77.0 L476.5 72.2 L470.7 66.5 Z" fill="none" stroke="#ffffff" stroke-width="1.3" stroke-linejoin="round"/><path d="M319.0 157.0 L308.5 161.8 L314.3 167.5 Z" fill="none" stroke="#ffffff" stroke-width="1.3" stroke-linejoin="round"/><path d="M466.0 157.0 L476.5 161.8 L470.7 167.5 Z" fill="none" stroke="#ffffff" stroke-width="1.3" stroke-linejoin="round"/></svg><div class="r" style="left:10.7px;top:6.7px;width:8.6px;height:8.6px;border-radius:50%;background:radial-gradient(circle at 50% 30%, #9ccaff 0%, #3d8cf0 45%, #1565dc 100%);box-shadow:0 0 0 1px rgba(0,0,0,0.6)"></div><div class="r" style="left:433.7px;top:6.7px;width:8.6px;height:8.6px;border-radius:50%;background:radial-gradient(circle at 50% 30%, #9ccaff 0%, #3d8cf0 45%, #1565dc 100%);box-shadow:0 0 0 1px rgba(0,0,0,0.6)"></div><div class="r" style="left:10.7px;top:431.7px;width:8.6px;height:8.6px;border-radius:50%;background:radial-gradient(circle at 50% 30%, #9ccaff 0%, #3d8cf0 45%, #1565dc 100%);box-shadow:0 0 0 1px rgba(0,0,0,0.6)"></div><div class="r" style="left:433.7px;top:431.7px;width:8.6px;height:8.6px;border-radius:50%;background:radial-gradient(circle at 50% 30%, #9ccaff 0%, #3d8cf0 45%, #1565dc 100%);box-shadow:0 0 0 1px rgba(0,0,0,0.6)"></div><div class="r" style="left:220.8px;top:217.3px;width:12.4px;height:12.4px;border-radius:50%;box-sizing:border-box;border:2.3px solid transparent;background:linear-gradient(#ffcc00,#ffcc00) padding-box, linear-gradient(180deg,#62a6ff,#0d62e0) border-box;box-shadow:0 0 0 0.8px rgba(40,30,0,0.55), inset 0 0 0 0.8px rgba(40,30,0,0.5)"></div><div class="t" style="left:383.5px;top:161.14px;font-size:12px;color:#f0f0f0;text-shadow:0 0 1px #000, 1px 1px 1px rgba(0,0,0,0.9), -1px 0 1px rgba(0,0,0,0.6);font-weight:normal;-webkit-text-stroke:0.25px #f0f0f0">4%</div><div class="t" style="left:0px;top:-10.86px;font-size:12px;color:#f0f0f0;left:384px;top:173px;transform-origin:0 0;transform:rotate(90deg);text-shadow:0 0 1px #000, 1px 1px 1px rgba(0,0,0,0.9), -1px 0 1px rgba(0,0,0,0.6);font-weight:normal;-webkit-text-stroke:0.25px #f0f0f0">4%</div></div><div class="r" style="left:0px;top:509px;width:517px;height:2px;background:#000000;"></div><div class="r" style="left:519px;top:2px;width:485px;height:19px;background:#282828;"></div><div class="r" style="left:519px;top:2px;width:94px;height:19px;background:#3c3c3c;border-radius:2px 2px 0 0"></div><svg class="r" style="left:528px;top:7px" width="11" height="11" viewBox="0 0 11 11"><circle cx="5.5" cy="5.5" r="5.2" fill="#c8c8c8"/><rect x="4.6" y="2.2" width="1.8" height="1.6" fill="#3c3c3c"/><rect x="4.6" y="4.6" width="1.8" height="4.2" fill="#3c3c3c"/></svg><div class="t" style="left:543px;top:5.69px;font-size:12.5px;color:#c4c4c4;">Inspector</div><div class="t" style="left:620px;top:5.69px;font-size:12.5px;color:#c4c4c4;">Collaborate</div><svg class="r" style="left:968px;top:5px" width="11" height="12" viewBox="0 0 11 12"><rect x="1.6" y="6.2" width="7.6" height="4.8" fill="none" stroke="#c8c8c8" stroke-width="1.2"/><path d="M8 6.2 V3.6 Q8 1.4 5.7 1.4 Q3.6 1.4 3 2.9" fill="none" stroke="#c8c8c8" stroke-width="1.2"/></svg><div class="r" style="left:989px;top:6.0px;width:2.3px;height:2.3px;background:#c4c4c4;"></div><div class="r" style="left:989px;top:9.9px;width:2.3px;height:2.3px;background:#c4c4c4;"></div><div class="r" style="left:989px;top:13.8px;width:2.3px;height:2.3px;background:#c4c4c4;"></div><div class="r" style="left:519px;top:21px;width:485px;height:490px;background:#3a3a3a;"></div><svg class="r" style="left:525px;top:31px" width="30" height="28" viewBox="0 0 30 28"><path d="M11 1.5 L20 6 L20 16.5 L11 21 L2 16.5 L2 6 Z M2 6 L11 10.5 L20 6 M11 10.5 L11 21" fill="none" stroke="#c8c8c8" stroke-width="1.4" stroke-linejoin="round"/><path d="M20.6 21.6 L27.6 21.6 L24.1 25.2 Z" fill="#c8c8c8"/></svg><div class="r" style="left:565px;top:32px;width:12px;height:12px;background:#2a2a2a;border:1px solid #212121;border-radius:2px"></div><svg class="r" style="left:565px;top:32px" width="14" height="14" viewBox="0 0 14 14"><path d="M3.3 7.6 L5.6 10 L10.8 4.5" fill="none" stroke="#e6e6e6" stroke-width="1.6" stroke-linecap="round" stroke-linejoin="round"/></svg><div class="r" style="left:585px;top:30px;width:347px;height:16px;background:#2a2a2a;border:1px solid #212121;border-radius:3px"></div><div class="t" style="left:588px;top:32.69px;font-size:12.5px;color:#d2d2d2;letter-spacing:0.2px;-webkit-text-stroke:0.4px #d2d2d2;">Medium Compartment 1 2</div><div class="r" style="left:937px;top:32px;width:12px;height:12px;background:#2a2a2a;border:1px solid #212121;border-radius:2px"></div><div class="t" style="left:955px;top:32.69px;font-size:12.5px;color:#c4c4c4;">Static</div><svg class="r" style="left:988.5px;top:36.0px" width="9" height="6"><path d="M0 0 L9 0 L4.5 6 Z" fill="#c4c4c4"/></svg><div class="t" style="left:562px;top:56.69px;font-size:12.5px;color:#a8a8a8;">Tag</div><div class="r" style="left:588px;top:55px;width:185px;height:16px;background:#515151;border-radius:3px;box-shadow:inset 0 -1px 0 #2e2e2e"></div><div class="t" style="left:591px;top:56.69px;font-size:12.5px;color:#d2d2d2;">Untagged</div><svg class="r" style="left:759.5px;top:60.0px" width="9" height="6"><path d="M0 0 L9 0 L4.5 6 Z" fill="#c4c4c4"/></svg><div class="t" style="left:787px;top:56.69px;font-size:12.5px;color:#a8a8a8;">Layer</div><div class="r" style="left:824px;top:55px;width:175px;height:16px;background:#515151;border-radius:3px;box-shadow:inset 0 -1px 0 #2e2e2e"></div><div class="t" style="left:827px;top:56.69px;font-size:12.5px;color:#d2d2d2;">Default</div><svg class="r" style="left:985.5px;top:60.0px" width="9" height="6"><path d="M0 0 L9 0 L4.5 6 Z" fill="#c4c4c4"/></svg><div class="r" style="left:519px;top:80px;width:485px;height:1px;background:#1a1a1a;"></div><div class="r" style="left:519px;top:81px;width:485px;height:20px;background:#3e3e3e;"></div><div class="r" style="left:519px;top:101px;width:485px;height:1px;background:#303030;"></div><svg class="r" style="left:525.5px;top:88.0px" width="9" height="8"><path d="M0 0 L9 0 L4.5 8 Z" fill="#808080"/></svg><svg class="r" style="left:540px;top:84px" width="14" height="14" viewBox="0 0 14 14"><path d="M5.44 5.44 L4.17 1.34 L1.34 4.17 Z M8.56 5.44 L12.66 4.17 L9.83 1.34 Z M5.44 8.56 L1.34 9.83 L4.17 12.66 Z M8.56 8.56 L9.83 12.66 L12.66 9.83 Z " fill="#d0d0d0" stroke="#d0d0d0" stroke-width="1.1" stroke-linejoin="round"/></svg><div class="t" style="left:580px;top:84.69px;font-size:12.5px;color:#d2d2d2;letter-spacing:0.2px;-webkit-text-stroke:0.4px #d2d2d2;">Rect Transform</div><svg class="r" style="left:945.5px;top:85.7px" width="11" height="11" viewBox="0 0 11 11"><circle cx="5.5" cy="5.5" r="5" fill="#c4c4c4"/><path d="M3.7 4.3 Q3.8 2.5 5.5 2.5 Q7.3 2.5 7.3 4.1 Q7.3 5.1 6.2 5.6 Q5.6 5.9 5.6 6.7" fill="none" stroke="#3e3e3e" stroke-width="1.4"/><rect x="4.9" y="7.6" width="1.4" height="1.4" fill="#3e3e3e"/></svg><svg class="r" style="left:965px;top:85.5px" width="13" height="12" viewBox="0 0 13 12"><path d="M1 2.8 H7 M10.5 2.8 H11.5 M1 7.9 H2.5 M6 7.9 H11.5" stroke="#c4c4c4" stroke-width="1.4"/><rect x="7.2" y="0.5" width="2.8" height="4.6" fill="#c4c4c4"/><rect x="3" y="5.9" width="2.6" height="4.6" fill="#c4c4c4"/></svg><div class="r" style="left:989.8px;top:86.0px;width:2.3px;height:2.3px;background:#c4c4c4;"></div><div class="r" style="left:989.8px;top:89.9px;width:2.3px;height:2.3px;background:#c4c4c4;"></div><div class="r" style="left:989.8px;top:93.8px;width:2.3px;height:2.3px;background:#c4c4c4;"></div><div class="t" style="left:545px;top:111.95px;font-size:11.1px;color:#c4c4c4;">custom</div><div class="t" style="left:0px;top:-9.86px;font-size:10.9px;color:#c4c4c4;left:527.5px;top:166px;transform-origin:0 0;transform:rotate(-90deg)">custom</div><div class="r" style="left:540px;top:125px;width:46px;height:46px;background:#353535;"></div><div class="r" style="left:546px;top:130px;width:35px;height:35px;background:transparent;border:1px solid #6e6e6e;box-sizing:border-box"></div><div class="r" style="left:555px;top:139px;width:17px;height:17px;background:transparent;border:1px solid #a0a0a0;box-sizing:border-box"></div><div class="t" style="left:716px;top:110.69px;font-size:12.5px;color:#c4c4c4;">Left</div><div class="r" style="left:715px;top:126px;width:92px;height:16px;background:#2a2a2a;border:1px solid #212121;border-radius:3px"></div><div class="t" style="left:718px;top:128.69px;font-size:12.5px;color:#d2d2d2;">-71.07993</div><div class="t" style="left:811px;top:110.69px;font-size:12.5px;color:#c4c4c4;">Top</div><div class="r" style="left:810px;top:126px;width:92px;height:16px;background:#2a2a2a;border:1px solid #212121;border-radius:3px"></div><div class="t" style="left:813px;top:128.69px;font-size:12.5px;color:#d2d2d2;">-15.98044</div><div class="t" style="left:907px;top:110.69px;font-size:12.5px;color:#c4c4c4;">Pos Z</div><div class="r" style="left:906px;top:126px;width:92px;height:16px;background:#2a2a2a;border:1px solid #212121;border-radius:3px"></div><div class="t" style="left:909px;top:128.69px;font-size:12.5px;color:#d2d2d2;">0</div><div class="t" style="left:716px;top:146.69px;font-size:12.5px;color:#c4c4c4;">Right</div><div class="r" style="left:715px;top:162px;width:92px;height:16px;background:#2a2a2a;border:1px solid #212121;border-radius:3px"></div><div class="t" style="left:718px;top:164.69px;font-size:12.5px;color:#d2d2d2;">6.079926</div><div class="t" style="left:811px;top:146.69px;font-size:12.5px;color:#c4c4c4;">Bottom</div><div class="r" style="left:810px;top:162px;width:92px;height:16px;background:#2a2a2a;border:1px solid #212121;border-radius:3px"></div><div class="t" style="left:813px;top:164.69px;font-size:12.5px;color:#d2d2d2;">-65.01956</div><div class="r" style="left:948px;top:160px;width:51px;height:19px;background:#303030;border:1px solid #262626;box-sizing:border-box;border-radius:3px"></div><div class="r" style="left:973px;top:162px;width:25px;height:16px;background:#585858;border-radius:0 2px 2px 0"></div><div class="r" style="left:956px;top:165px;width:10px;height:10px;background:transparent;border:1px dashed #c4c4c4;box-sizing:border-box"></div><div class="t" style="left:981px;top:164.59px;font-size:11.5px;color:#9a9a9a;">R</div><svg class="r" style="left:525.5px;top:188.0px" width="9" height="8"><path d="M0 0 L9 0 L4.5 8 Z" fill="#808080"/></svg><div class="t" style="left:539px;top:184.69px;font-size:12.5px;color:#c4c4c4;">Anchors</div><div class="t" style="left:553px;top:202.69px;font-size:12.5px;color:#c4c4c4;">Min</div><div class="t" style="left:553px;top:222.69px;font-size:12.5px;color:#c4c4c4;">Max</div><div class="t" style="left:538px;top:244.69px;font-size:12.5px;color:#c4c4c4;">Pivot</div><div class="t" style="left:716px;top:203.29px;font-size:12.5px;color:#c4c4c4;">X</div><div class="r" style="left:727.5px;top:200px;width:79px;height:16px;background:#2a2a2a;border:1px solid #212121;border-radius:3px"></div><div class="t" style="left:730.5px;top:202.69px;font-size:12.5px;color:#d2d2d2;">0.5</div><div class="t" style="left:811px;top:203.29px;font-size:12.5px;color:#c4c4c4;">Y</div><div class="r" style="left:823px;top:200px;width:79px;height:16px;background:#2a2a2a;border:1px solid #212121;border-radius:3px"></div><div class="t" style="left:826px;top:202.69px;font-size:12.5px;color:#d2d2d2;">0.5</div><div class="t" style="left:716px;top:223.29px;font-size:12.5px;color:#c4c4c4;">X</div><div class="r" style="left:727.5px;top:220px;width:79px;height:16px;background:#2a2a2a;border:1px solid #212121;border-radius:3px"></div><div class="t" style="left:730.5px;top:222.69px;font-size:12.5px;color:#d2d2d2;">0.535</div><div class="t" style="left:811px;top:223.29px;font-size:12.5px;color:#c4c4c4;">Y</div><div class="r" style="left:823px;top:220px;width:79px;height:16px;background:#2a2a2a;border:1px solid #212121;border-radius:3px"></div><div class="t" style="left:826px;top:222.69px;font-size:12.5px;color:#d2d2d2;">0.538</div><div class="t" style="left:716px;top:245.29px;font-size:12.5px;color:#c4c4c4;">X</div><div class="r" style="left:727.5px;top:242px;width:79px;height:16px;background:#2a2a2a;border:1px solid #212121;border-radius:3px"></div><div class="t" style="left:730.5px;top:244.69px;font-size:12.5px;color:#d2d2d2;">0.5</div><div class="t" style="left:811px;top:245.29px;font-size:12.5px;color:#c4c4c4;">Y</div><div class="r" style="left:823px;top:242px;width:79px;height:16px;background:#2a2a2a;border:1px solid #212121;border-radius:3px"></div><div class="t" style="left:826px;top:244.69px;font-size:12.5px;color:#d2d2d2;">0.5</div><div class="t" style="left:538px;top:272.69px;font-size:12.5px;color:#c4c4c4;">Rotation</div><div class="t" style="left:538px;top:292.69px;font-size:12.5px;color:#c4c4c4;">Scale</div><div class="t" style="left:719px;top:273.29px;font-size:12.5px;color:#c4c4c4;">X</div><div class="r" style="left:730px;top:270px;width:77px;height:16px;background:#2a2a2a;border:1px solid #212121;border-radius:3px"></div><div class="t" style="left:733px;top:272.69px;font-size:12.5px;color:#d2d2d2;">0</div><div class="t" style="left:814px;top:273.29px;font-size:12.5px;color:#c4c4c4;">Y</div><div class="r" style="left:826px;top:270px;width:76px;height:16px;background:#2a2a2a;border:1px solid #212121;border-radius:3px"></div><div class="t" style="left:829px;top:272.69px;font-size:12.5px;color:#d2d2d2;">0</div><div class="t" style="left:910px;top:273.29px;font-size:12.5px;color:#c4c4c4;">Z</div><div class="r" style="left:922px;top:270px;width:76px;height:16px;background:#2a2a2a;border:1px solid #212121;border-radius:3px"></div><div class="t" style="left:925px;top:272.69px;font-size:12.5px;color:#d2d2d2;">0</div><div class="t" style="left:719px;top:293.29px;font-size:12.5px;color:#c4c4c4;">X</div><div class="r" style="left:730px;top:290px;width:77px;height:16px;background:#2a2a2a;border:1px solid #212121;border-radius:3px"></div><div class="t" style="left:733px;top:292.69px;font-size:12.5px;color:#d2d2d2;">1</div><div class="t" style="left:814px;top:293.29px;font-size:12.5px;color:#c4c4c4;">Y</div><div class="r" style="left:826px;top:290px;width:76px;height:16px;background:#2a2a2a;border:1px solid #212121;border-radius:3px"></div><div class="t" style="left:829px;top:292.69px;font-size:12.5px;color:#d2d2d2;">1</div><div class="t" style="left:910px;top:293.29px;font-size:12.5px;color:#c4c4c4;">Z</div><div class="r" style="left:922px;top:290px;width:76px;height:16px;background:#2a2a2a;border:1px solid #212121;border-radius:3px"></div><div class="t" style="left:925px;top:292.69px;font-size:12.5px;color:#d2d2d2;">1</div><div class="r" style="left:519px;top:317px;width:485px;height:1px;background:#1a1a1a;"></div><div class="r" style="left:519px;top:318px;width:485px;height:20px;background:#3e3e3e;"></div><div class="r" style="left:519px;top:338px;width:485px;height:1px;background:#303030;"></div><svg class="r" style="left:525.5px;top:325.0px" width="9" height="8"><path d="M0 0 L9 0 L4.5 8 Z" fill="#808080"/></svg><svg class="r" style="left:539px;top:322px" width="17" height="12" viewBox="0 0 17 12"><path d="M1 6 Q8.5 -2 16 6 Q8.5 14 1 6 Z" fill="none" stroke="#d0d0d0" stroke-width="1.3"/><circle cx="8.5" cy="6" r="2.6" fill="none" stroke="#d0d0d0" stroke-width="1.3"/></svg><div class="t" style="left:580px;top:321.69px;font-size:12.5px;color:#d2d2d2;letter-spacing:0.2px;-webkit-text-stroke:0.4px #d2d2d2;">Canvas Renderer</div><svg class="r" style="left:945.5px;top:322.7px" width="11" height="11" viewBox="0 0 11 11"><circle cx="5.5" cy="5.5" r="5" fill="#c4c4c4"/><path d="M3.7 4.3 Q3.8 2.5 5.5 2.5 Q7.3 2.5 7.3 4.1 Q7.3 5.1 6.2 5.6 Q5.6 5.9 5.6 6.7" fill="none" stroke="#3e3e3e" stroke-width="1.4"/><rect x="4.9" y="7.6" width="1.4" height="1.4" fill="#3e3e3e"/></svg><svg class="r" style="left:965px;top:322.5px" width="13" height="12" viewBox="0 0 13 12"><path d="M1 2.8 H7 M10.5 2.8 H11.5 M1 7.9 H2.5 M6 7.9 H11.5" stroke="#c4c4c4" stroke-width="1.4"/><rect x="7.2" y="0.5" width="2.8" height="4.6" fill="#c4c4c4"/><rect x="3" y="5.9" width="2.6" height="4.6" fill="#c4c4c4"/></svg><div class="r" style="left:989.8px;top:323.0px;width:2.3px;height:2.3px;background:#c4c4c4;"></div><div class="r" style="left:989.8px;top:326.9px;width:2.3px;height:2.3px;background:#c4c4c4;"></div><div class="r" style="left:989.8px;top:330.8px;width:2.3px;height:2.3px;background:#c4c4c4;"></div><div class="t" style="left:538px;top:345.69px;font-size:12.5px;color:#c4c4c4;">Cull Transparent Mesh</div><div class="r" style="left:718px;top:345px;width:12px;height:12px;background:#2a2a2a;border:1px solid #212121;border-radius:2px"></div><svg class="r" style="left:718px;top:345px" width="14" height="14" viewBox="0 0 14 14"><path d="M3.3 7.6 L5.6 10 L10.8 4.5" fill="none" stroke="#e6e6e6" stroke-width="1.6" stroke-linecap="round" stroke-linejoin="round"/></svg><div class="r" style="left:519px;top:370px;width:485px;height:1px;background:#1a1a1a;"></div><div class="r" style="left:519px;top:371px;width:485px;height:20px;background:#3e3e3e;"></div><div class="r" style="left:519px;top:391px;width:485px;height:1px;background:#303030;"></div><svg class="r" style="left:525.5px;top:378.0px" width="9" height="8"><path d="M0 0 L9 0 L4.5 8 Z" fill="#808080"/></svg><svg class="r" style="left:539px;top:373px" width="16" height="16" viewBox="0 0 16 16"><rect x="2.5" y="2.5" width="11" height="11" fill="none" stroke="#d0d0d0" stroke-width="1.2"/><rect x="0.5" y="0.5" width="3" height="3" fill="#d0d0d0"/><rect x="12.5" y="0.5" width="3" height="3" fill="#d0d0d0"/><rect x="0.5" y="12.5" width="3" height="3" fill="#d0d0d0"/><rect x="12.5" y="12.5" width="3" height="3" fill="#d0d0d0"/><path d="M4 12 L7 8 L9 10 L10.5 8.5 L12 12 Z" fill="#d0d0d0"/><circle cx="6" cy="6" r="1.2" fill="#d0d0d0"/></svg><div class="r" style="left:559px;top:374px;width:12px;height:12px;background:#2a2a2a;border:1px solid #212121;border-radius:2px"></div><svg class="r" style="left:559px;top:374px" width="14" height="14" viewBox="0 0 14 14"><path d="M3.3 7.6 L5.6 10 L10.8 4.5" fill="none" stroke="#e6e6e6" stroke-width="1.6" stroke-linecap="round" stroke-linejoin="round"/></svg><div class="t" style="left:580px;top:374.69px;font-size:12.5px;color:#d2d2d2;letter-spacing:0.2px;-webkit-text-stroke:0.4px #d2d2d2;">Image</div><svg class="r" style="left:945.5px;top:375.7px" width="11" height="11" viewBox="0 0 11 11"><circle cx="5.5" cy="5.5" r="5" fill="#c4c4c4"/><path d="M3.7 4.3 Q3.8 2.5 5.5 2.5 Q7.3 2.5 7.3 4.1 Q7.3 5.1 6.2 5.6 Q5.6 5.9 5.6 6.7" fill="none" stroke="#3e3e3e" stroke-width="1.4"/><rect x="4.9" y="7.6" width="1.4" height="1.4" fill="#3e3e3e"/></svg><svg class="r" style="left:965px;top:375.5px" width="13" height="12" viewBox="0 0 13 12"><path d="M1 2.8 H7 M10.5 2.8 H11.5 M1 7.9 H2.5 M6 7.9 H11.5" stroke="#c4c4c4" stroke-width="1.4"/><rect x="7.2" y="0.5" width="2.8" height="4.6" fill="#c4c4c4"/><rect x="3" y="5.9" width="2.6" height="4.6" fill="#c4c4c4"/></svg><div class="r" style="left:989.8px;top:376.0px;width:2.3px;height:2.3px;background:#c4c4c4;"></div><div class="r" style="left:989.8px;top:379.9px;width:2.3px;height:2.3px;background:#c4c4c4;"></div><div class="r" style="left:989.8px;top:383.8px;width:2.3px;height:2.3px;background:#c4c4c4;"></div><div class="t" style="left:538px;top:398.89px;font-size:12.5px;color:#c4c4c4;">Source Image</div><div class="r" style="left:718px;top:396px;width:280px;height:16px;background:#2a2a2a;border:1px solid #212121;border-radius:3px"></div><div class="t" style="left:721px;top:398.69px;font-size:12.5px;color:#d2d2d2;">None (Sprite)</div><div class="r" style="left:981px;top:397px;width:18px;height:16px;background:#2f2f2f;border-radius:0 2px 2px 0"></div><div class="r" style="left:981px;top:397px;width:1px;height:16px;background:#232323;"></div><svg class="r" style="left:984px;top:399px" width="12" height="12" viewBox="0 0 12 12"><circle cx="6" cy="6" r="4.6" fill="none" stroke="#c8c8c8" stroke-width="1.2"/><circle cx="6" cy="6" r="1.4" fill="#d0d0d0"/></svg><div class="t" style="left:538px;top:418.89px;font-size:12.5px;color:#c4c4c4;">Color</div><div class="r" style="left:718px;top:417px;width:263px;height:13px;background:#ffcc00;"></div><div class="r" style="left:718px;top:430px;width:263px;height:3px;background:#ffffff;"></div><div class="r" style="left:981px;top:416px;width:19px;height:18px;background:#333333;border:1px solid #262626;box-sizing:border-box;border-radius:0 3px 3px 0"></div><svg class="r" style="left:984px;top:418px" width="14" height="14" viewBox="0 0 14 14"><path d="M2.6 11.6 L8.2 6" stroke="#c8c8c8" stroke-width="2.4" stroke-linecap="round"/><path d="M6.8 4.4 L9.8 7.4" stroke="#c8c8c8" stroke-width="1.8" stroke-linecap="round"/><path d="M8.6 5.6 L11.2 3" stroke="#c8c8c8" stroke-width="2.6" stroke-linecap="round"/></svg><div class="t" style="left:538px;top:438.69px;font-size:12.5px;color:#c4c4c4;">Material</div><div class="r" style="left:718px;top:436px;width:280px;height:16px;background:#2a2a2a;border:1px solid #212121;border-radius:3px"></div><div class="t" style="left:721px;top:438.69px;font-size:12.5px;color:#d2d2d2;">None (Material)</div><div class="r" style="left:981px;top:437px;width:18px;height:16px;background:#2f2f2f;border-radius:0 2px 2px 0"></div><div class="r" style="left:981px;top:437px;width:1px;height:16px;background:#232323;"></div><svg class="r" style="left:984px;top:439px" width="12" height="12" viewBox="0 0 12 12"><circle cx="6" cy="6" r="4.6" fill="none" stroke="#c8c8c8" stroke-width="1.2"/><circle cx="6" cy="6" r="1.4" fill="#d0d0d0"/></svg><div class="t" style="left:538px;top:458.69px;font-size:12.5px;color:#c4c4c4;">Raycast Target</div><div class="r" style="left:718px;top:457px;width:12px;height:12px;background:#2a2a2a;border:1px solid #212121;border-radius:2px"></div><svg class="r" style="left:718px;top:457px" width="14" height="14" viewBox="0 0 14 14"><path d="M3.3 7.6 L5.6 10 L10.8 4.5" fill="none" stroke="#e6e6e6" stroke-width="1.6" stroke-linecap="round" stroke-linejoin="round"/></svg><svg class="r" style="left:527.0px;top:480.5px" width="6" height="9"><path d="M0 0 L6 4.5 L0 9 Z" fill="#808080"/></svg><div class="t" style="left:538px;top:478.69px;font-size:12.5px;color:#c4c4c4;">Raycast Padding</div><div class="t" style="left:538px;top:498.69px;font-size:12.5px;color:#c4c4c4;">Maskable</div><div class="r" style="left:718px;top:498px;width:12px;height:12px;background:#2a2a2a;border:1px solid #212121;border-radius:2px"></div><svg class="r" style="left:718px;top:498px" width="14" height="14" viewBox="0 0 14 14"><path d="M3.3 7.6 L5.6 10 L10.8 4.5" fill="none" stroke="#e6e6e6" stroke-width="1.6" stroke-linecap="round" stroke-linejoin="round"/></svg></div><div class="p" style="top:1022px"><div class="r" style="left:0px;top:0px;width:1004px;height:2px;background:#191919;"></div><div class="r" style="left:0px;top:2px;width:517px;height:19px;background:#282828;"></div><div class="r" style="left:502.8px;top:6.0px;width:2.3px;height:2.3px;background:#c4c4c4;"></div><div class="r" style="left:502.8px;top:9.9px;width:2.3px;height:2.3px;background:#c4c4c4;"></div><div class="r" style="left:502.8px;top:13.8px;width:2.3px;height:2.3px;background:#c4c4c4;"></div><div class="r" style="left:0px;top:21px;width:517px;height:20px;background:#3c3c3c;"></div><div class="r" style="left:0px;top:41px;width:517px;height:1px;background:#232323;"></div><div class="r" style="left:0px;top:42px;width:517px;height:24px;background:#404040;"></div><div class="r" style="left:172px;top:21px;width:1px;height:20px;background:#2a2a2a;"></div><div class="r" style="left:198px;top:21px;width:1px;height:20px;background:#2a2a2a;"></div><div class="r" style="left:233px;top:21px;width:1px;height:20px;background:#2a2a2a;"></div><div class="r" style="left:234px;top:21px;width:67px;height:20px;background:#4a4a4a;"></div><div class="r" style="left:284px;top:24px;width:1px;height:14px;background:#3a3a3a;"></div><div class="r" style="left:301px;top:21px;width:1px;height:20px;background:#2a2a2a;"></div><svg class="r" style="left:176px;top:23px" width="17" height="16" viewBox="0 0 17 16"><path d="M5.6 5.6 L14.2 13.8" stroke="#c8c8c8" stroke-width="2.3" stroke-linecap="round"/><path d="M4.3 1.6 A2.8 2.8 0 1 1 1.6 4.3" fill="none" stroke="#c8c8c8" stroke-width="2.1"/><path d="M14.6 3.4 L5.4 12.6" stroke="#c8c8c8" stroke-width="2.6" stroke-linecap="round"/><path d="M4.3 11.5 L6.5 13.7 L2.7 15.2 Z" fill="#c8c8c8"/></svg><svg class="r" style="left:203px;top:26px" width="14" height="10" viewBox="0 0 14 10"><rect x="0.8" y="1" width="7.8" height="8" rx="0.8" fill="#c8c8c8"/><path d="M8.6 3.6 L13 1 L13 9 L8.6 6.4 Z" fill="#c8c8c8"/></svg><svg class="r" style="left:220.0px;top:28.5px" width="8" height="5"><path d="M0 0 L8 0 L4.0 5 Z" fill="#c4c4c4"/></svg><div class="t" style="left:237px;top:24.87px;font-size:12.3px;color:#c4c4c4;">Gizmos</div><svg class="r" style="left:289.0px;top:28.5px" width="8" height="5"><path d="M0 0 L8 0 L4.0 5 Z" fill="#c4c4c4"/></svg><div class="r" style="left:309px;top:23px;width:205px;height:16px;background:#2a2a2a;border:1px solid #232323;box-sizing:border-box;border-radius:4px"></div><svg class="r" style="left:313px;top:26px" width="12" height="10" viewBox="0 0 12 10"><circle cx="3.5" cy="4" r="2.4" fill="none" stroke="#a0a0a0" stroke-width="1.3"/><path d="M5.5 5 L8.5 7.5" stroke="#a0a0a0" stroke-width="1.4"/><path d="M8.5 3 L11.5 3 L10 4.8 Z" fill="#a0a0a0"/></svg><div class="t" style="left:328px;top:24.82px;font-size:11.8px;color:#7a7a7a;">All</div><div class="r" style="left:438px;top:48px;width:12px;height:12px;background:#2a2a2a;border:1px solid #212121;border-radius:2px"></div><svg class="r" style="left:438px;top:48px" width="14" height="14" viewBox="0 0 14 14"><path d="M3.3 7.6 L5.6 10 L10.8 4.5" fill="none" stroke="#e6e6e6" stroke-width="1.6" stroke-linecap="round" stroke-linejoin="round"/></svg><div class="t" style="left:455px;top:48.99px;font-size:12.5px;color:#c4c4c4;">Auto Save</div><div class="r" style="left:517px;top:0px;width:2px;height:511px;background:#191919;"></div><div class="r" style="left:0;top:66px;width:517px;height:443px;overflow:hidden;background:#050709"><svg class="r" style="left:0;top:0" width="517" height="443"><rect x="0" y="0" width="517" height="443" fill="#030303" /><rect x="0" y="0" width="517" height="161" fill="#04101d" /><polygon points="0,104 54,82 108,57 143,39 172,29 215,0 362,0 323,25 287,40 251,54 201,75 179,84 143,104 108,118 72,126 0,138" fill="#525751" /><ellipse cx="105" cy="93" rx="9" ry="5" fill="#2a2f33" opacity="0.45"/><ellipse cx="155" cy="67" rx="8" ry="5" fill="#2a2f33" opacity="0.45"/><ellipse cx="190" cy="50" rx="12" ry="8" fill="#2a2f33" opacity="0.45"/><ellipse cx="245" cy="16" rx="7" ry="4" fill="#2a2f33" opacity="0.45"/><ellipse cx="60" cy="117" rx="6" ry="3" fill="#2a2f33" opacity="0.45"/><ellipse cx="130" cy="112" rx="10" ry="4" fill="#2a2f33" opacity="0.45"/><ellipse cx="312" cy="6" rx="5" ry="3" fill="#2a2f33" opacity="0.45"/><polygon points="283,144 283,112 319,90 361,67 430,42 457,22 490,11 517,9 517,65 465,85 430,104 319,144" fill="#4e534e" /><polygon points="232,178 340,179 389,192 446,218 517,245 517,308 490,300 446,282 393,257 340,236 283,210 232,182" fill="#28251a" /><polygon points="0,174 93,180 206,246 309,297 412,338 517,374 517,428 470,407 412,380 309,344 206,302 103,251 31,220 0,212" fill="#2a271b" /><rect x="463" y="102" width="22" height="5" fill="#3a0c0c" /><polygon points="495,92 517,97 517,124 500,117" fill="#2e0a0c" /><rect x="208" y="87" width="63" height="5" fill="#3a0a0a" /><line x1="33.4" y1="0" x2="33.4" y2="443" stroke="rgba(150,150,150,0.08)" stroke-width="1"/><line x1="76.1" y1="0" x2="76.1" y2="443" stroke="rgba(150,150,150,0.08)" stroke-width="1"/><line x1="118.8" y1="0" x2="118.8" y2="443" stroke="rgba(150,150,150,0.08)" stroke-width="1"/><line x1="161.5" y1="0" x2="161.5" y2="443" stroke="rgba(150,150,150,0.08)" stroke-width="1"/><line x1="204.2" y1="0" x2="204.2" y2="443" stroke="rgba(150,150,150,0.08)" stroke-width="1"/><line x1="246.9" y1="0" x2="246.9" y2="443" stroke="rgba(150,150,150,0.08)" stroke-width="1"/><line x1="289.6" y1="0" x2="289.6" y2="443" stroke="rgba(150,150,150,0.08)" stroke-width="1"/><line x1="332.3" y1="0" x2="332.3" y2="443" stroke="rgba(150,150,150,0.08)" stroke-width="1"/><line x1="375.0" y1="0" x2="375.0" y2="443" stroke="rgba(150,150,150,0.08)" stroke-width="1"/><line x1="417.7" y1="0" x2="417.7" y2="443" stroke="rgba(150,150,150,0.08)" stroke-width="1"/><line x1="460.4" y1="0" x2="460.4" y2="443" stroke="rgba(150,150,150,0.08)" stroke-width="1"/><line x1="503.1" y1="0" x2="503.1" y2="443" stroke="rgba(150,150,150,0.08)" stroke-width="1"/><line x1="545.8" y1="0" x2="545.8" y2="443" stroke="rgba(150,150,150,0.08)" stroke-width="1"/><line x1="0" y1="-0.2" x2="517" y2="-0.2" stroke="rgba(150,150,150,0.08)" stroke-width="1"/><line x1="0" y1="42.5" x2="517" y2="42.5" stroke="rgba(150,150,150,0.08)" stroke-width="1"/><line x1="0" y1="85.2" x2="517" y2="85.2" stroke="rgba(150,150,150,0.08)" stroke-width="1"/><line x1="0" y1="127.9" x2="517" y2="127.9" stroke="rgba(150,150,150,0.08)" stroke-width="1"/><line x1="0" y1="170.6" x2="517" y2="170.6" stroke="rgba(150,150,150,0.08)" stroke-width="1"/><line x1="0" y1="213.3" x2="517" y2="213.3" stroke="rgba(150,150,150,0.08)" stroke-width="1"/><line x1="0" y1="256.0" x2="517" y2="256.0" stroke="rgba(150,150,150,0.08)" stroke-width="1"/><line x1="0" y1="298.7" x2="517" y2="298.7" stroke="rgba(150,150,150,0.08)" stroke-width="1"/><line x1="0" y1="341.4" x2="517" y2="341.4" stroke="rgba(150,150,150,0.08)" stroke-width="1"/><line x1="0" y1="384.1" x2="517" y2="384.1" stroke="rgba(150,150,150,0.08)" stroke-width="1"/><line x1="0" y1="426.8" x2="517" y2="426.8" stroke="rgba(150,150,150,0.08)" stroke-width="1"/><line x1="0" y1="469.5" x2="517" y2="469.5" stroke="rgba(150,150,150,0.08)" stroke-width="1"/><rect x="21" y="0" width="7" height="443" fill="#540606" /><rect x="0" y="26" width="28" height="6" fill="#540606" /><rect x="0" y="285" width="28" height="6" fill="#540606" /><rect x="0" y="0" width="20" height="25" fill="#0d0c09" /><rect x="31" y="71" width="6" height="171" fill="#134747" /><rect x="37" y="153" width="75" height="7" fill="#134747" /><rect x="0" y="157" width="37" height="4" fill="#142626" /><rect x="327" y="0" width="9" height="376" fill="#134747" /><rect x="0" y="367" width="336" height="9" fill="#134747" /><rect x="199" y="0" width="7" height="156" fill="#2a6010" /><rect x="118" y="115" width="399" height="5" fill="#625c17" /><rect x="118" y="114" width="4" height="89" fill="#625c17" /><rect x="118" y="197" width="399" height="5" fill="#625c17" /><rect x="373" y="158" width="5" height="85" fill="#625c17" /><rect x="450" y="26" width="5" height="112" fill="#625c17" /><rect x="450" y="174" width="5" height="116" fill="#625c17" /><rect x="449" y="26" width="68" height="6" fill="#625c17" /><rect x="450" y="284" width="67" height="5" fill="#625c17" /><rect x="490" y="70" width="5" height="81" fill="#625c17" /><rect x="490" y="169" width="5" height="74" fill="#625c17" /><rect x="500" y="152" width="17" height="8" fill="#625c17" /><rect x="203" y="156" width="127" height="7" fill="#0c1676" /><polygon points="443,138 472,137 500,150 500,162 472,169 443,171" fill="#0b177c" /><rect x="0" y="384" width="150" height="5" fill="#48084f" /><rect x="144" y="384" width="6" height="59" fill="#48084f" /><rect x="0" y="399" width="517" height="7" fill="#540606" /><rect x="105" y="406" width="6" height="37" fill="#540606" /><rect x="125" y="408" width="6" height="35" fill="#540606" /><polygon points="172,406 205,410 235,414 235,418 215,418 215,443 208,443 208,418 172,412" fill="#540606" /><rect x="226" y="418" width="6" height="25" fill="#540606" /><line x1="176" y1="380" x2="206" y2="360" stroke="#5a5a5a" stroke-width="2"/><polygon points="229,443 229,440 316,436 396,433 465,429 517,427 517,443" fill="#e8e8e8" /></svg><div class="r" style="left:0px;top:77px;width:517px;height:1px;background:transparent;background:repeating-linear-gradient(90deg, rgba(255,255,255,0.8) 0 10px, transparent 10px 20px)"></div><div class="r" style="left:0px;top:156px;width:517px;height:1px;background:transparent;background:repeating-linear-gradient(90deg, rgba(255,255,255,0.8) 0 10px, transparent 10px 20px)"></div><div class="r" style="left:319px;top:0px;width:1px;height:443px;background:transparent;background:repeating-linear-gradient(180deg, transparent 0 7px, rgba(255,255,255,0.8) 7px 17px, transparent 17px 20px)"></div><div class="r" style="left:465px;top:0px;width:1px;height:443px;background:transparent;background:repeating-linear-gradient(180deg, transparent 0 7px, rgba(255,255,255,0.8) 7px 17px, transparent 17px 20px)"></div><div class="r" style="left:319px;top:77px;width:147px;height:80px;background:#ffcc00;box-shadow:inset 1px 1px 0 #f4f4f4, inset -1px -1px 0 #f4f4f4"></div><svg class="r" style="left:0;top:0" width="517" height="443"><path d="M319.0 77.0 L308.5 72.2 L314.3 66.5 Z" fill="none" stroke="#ffffff" stroke-width="1.3" stroke-linejoin="round"/><path d="M466.0 77.0 L476.5 72.2 L470.7 66.5 Z" fill="none" stroke="#ffffff" stroke-width="1.3" stroke-linejoin="round"/><path d="M319.0 157.0 L308.5 161.8 L314.3 167.5 Z" fill="none" stroke="#ffffff" stroke-width="1.3" stroke-linejoin="round"/><path d="M466.0 157.0 L476.5 161.8 L470.7 167.5 Z" fill="none" stroke="#ffffff" stroke-width="1.3" stroke-linejoin="round"/></svg><div class="r" style="left:314.2px;top:75.7px;width:8.6px;height:8.6px;border-radius:50%;background:radial-gradient(circle at 50% 30%, #9ccaff 0%, #3d8cf0 45%, #1565dc 100%);box-shadow:0 0 0 1px rgba(0,0,0,0.6)"></div><div class="r" style="left:459.7px;top:75.7px;width:8.6px;height:8.6px;border-radius:50%;background:radial-gradient(circle at 50% 30%, #9ccaff 0%, #3d8cf0 45%, #1565dc 100%);box-shadow:0 0 0 1px rgba(0,0,0,0.6)"></div><div class="r" style="left:314.2px;top:154.7px;width:8.6px;height:8.6px;border-radius:50%;background:radial-gradient(circle at 50% 30%, #9ccaff 0%, #3d8cf0 45%, #1565dc 100%);box-shadow:0 0 0 1px rgba(0,0,0,0.6)"></div><div class="r" style="left:459.7px;top:154.7px;width:8.6px;height:8.6px;border-radius:50%;background:radial-gradient(circle at 50% 30%, #9ccaff 0%, #3d8cf0 45%, #1565dc 100%);box-shadow:0 0 0 1px rgba(0,0,0,0.6)"></div><div class="r" style="left:384.8px;top:112.8px;width:12.4px;height:12.4px;border-radius:50%;box-sizing:border-box;border:2.3px solid transparent;background:linear-gradient(#ffcc00,#ffcc00) padding-box, linear-gradient(180deg,#62a6ff,#0d62e0) border-box;box-shadow:0 0 0 0.8px rgba(40,30,0,0.55), inset 0 0 0 0.8px rgba(40,30,0,0.5)"></div><div class="t" style="left:383.5px;top:160.14px;font-size:12px;color:#f0f0f0;text-shadow:0 0 1px #000, 1px 1px 1px rgba(0,0,0,0.9), -1px 0 1px rgba(0,0,0,0.6);font-weight:normal;-webkit-text-stroke:0.25px #f0f0f0">4%</div><div class="t" style="left:0px;top:-10.86px;font-size:12px;color:#f0f0f0;left:384px;top:174px;transform-origin:0 0;transform:rotate(90deg);text-shadow:0 0 1px #000, 1px 1px 1px rgba(0,0,0,0.9), -1px 0 1px rgba(0,0,0,0.6);font-weight:normal;-webkit-text-stroke:0.25px #f0f0f0">4%</div></div><div class="r" style="left:0px;top:509px;width:517px;height:2px;background:#000000;"></div><div class="r" style="left:519px;top:2px;width:485px;height:19px;background:#282828;"></div><div class="r" style="left:519px;top:2px;width:94px;height:19px;background:#3c3c3c;border-radius:2px 2px 0 0"></div><svg class="r" style="left:528px;top:7px" width="11" height="11" viewBox="0 0 11 11"><circle cx="5.5" cy="5.5" r="5.2" fill="#c8c8c8"/><rect x="4.6" y="2.2" width="1.8" height="1.6" fill="#3c3c3c"/><rect x="4.6" y="4.6" width="1.8" height="4.2" fill="#3c3c3c"/></svg><div class="t" style="left:543px;top:5.69px;font-size:12.5px;color:#c4c4c4;">Inspector</div><div class="t" style="left:620px;top:5.69px;font-size:12.5px;color:#c4c4c4;">Collaborate</div><svg class="r" style="left:968px;top:5px" width="11" height="12" viewBox="0 0 11 12"><rect x="1.6" y="6.2" width="7.6" height="4.8" fill="none" stroke="#c8c8c8" stroke-width="1.2"/><path d="M8 6.2 V3.6 Q8 1.4 5.7 1.4 Q3.6 1.4 3 2.9" fill="none" stroke="#c8c8c8" stroke-width="1.2"/></svg><div class="r" style="left:989px;top:6.0px;width:2.3px;height:2.3px;background:#c4c4c4;"></div><div class="r" style="left:989px;top:9.9px;width:2.3px;height:2.3px;background:#c4c4c4;"></div><div class="r" style="left:989px;top:13.8px;width:2.3px;height:2.3px;background:#c4c4c4;"></div><div class="r" style="left:519px;top:21px;width:485px;height:490px;background:#3a3a3a;"></div><svg class="r" style="left:525px;top:31px" width="30" height="28" viewBox="0 0 30 28"><path d="M11 1.5 L20 6 L20 16.5 L11 21 L2 16.5 L2 6 Z M2 6 L11 10.5 L20 6 M11 10.5 L11 21" fill="none" stroke="#c8c8c8" stroke-width="1.4" stroke-linejoin="round"/><path d="M20.6 21.6 L27.6 21.6 L24.1 25.2 Z" fill="#c8c8c8"/></svg><div class="r" style="left:565px;top:32px;width:12px;height:12px;background:#2a2a2a;border:1px solid #212121;border-radius:2px"></div><svg class="r" style="left:565px;top:32px" width="14" height="14" viewBox="0 0 14 14"><path d="M3.3 7.6 L5.6 10 L10.8 4.5" fill="none" stroke="#e6e6e6" stroke-width="1.6" stroke-linecap="round" stroke-linejoin="round"/></svg><div class="r" style="left:585px;top:30px;width:347px;height:16px;background:#2a2a2a;border:1px solid #212121;border-radius:3px"></div><div class="t" style="left:588px;top:32.69px;font-size:12.5px;color:#d2d2d2;letter-spacing:0.2px;-webkit-text-stroke:0.4px #d2d2d2;">Medium Compartment 1 2</div><div class="r" style="left:937px;top:32px;width:12px;height:12px;background:#2a2a2a;border:1px solid #212121;border-radius:2px"></div><div class="t" style="left:955px;top:32.69px;font-size:12.5px;color:#c4c4c4;">Static</div><svg class="r" style="left:988.5px;top:36.0px" width="9" height="6"><path d="M0 0 L9 0 L4.5 6 Z" fill="#c4c4c4"/></svg><div class="t" style="left:562px;top:56.69px;font-size:12.5px;color:#a8a8a8;">Tag</div><div class="r" style="left:588px;top:55px;width:185px;height:16px;background:#515151;border-radius:3px;box-shadow:inset 0 -1px 0 #2e2e2e"></div><div class="t" style="left:591px;top:56.69px;font-size:12.5px;color:#d2d2d2;">Untagged</div><svg class="r" style="left:759.5px;top:60.0px" width="9" height="6"><path d="M0 0 L9 0 L4.5 6 Z" fill="#c4c4c4"/></svg><div class="t" style="left:787px;top:56.69px;font-size:12.5px;color:#a8a8a8;">Layer</div><div class="r" style="left:824px;top:55px;width:175px;height:16px;background:#515151;border-radius:3px;box-shadow:inset 0 -1px 0 #2e2e2e"></div><div class="t" style="left:827px;top:56.69px;font-size:12.5px;color:#d2d2d2;">Default</div><svg class="r" style="left:985.5px;top:60.0px" width="9" height="6"><path d="M0 0 L9 0 L4.5 6 Z" fill="#c4c4c4"/></svg><div class="r" style="left:519px;top:80px;width:485px;height:1px;background:#1a1a1a;"></div><div class="r" style="left:519px;top:81px;width:485px;height:20px;background:#3e3e3e;"></div><div class="r" style="left:519px;top:101px;width:485px;height:1px;background:#303030;"></div><svg class="r" style="left:525.5px;top:88.0px" width="9" height="8"><path d="M0 0 L9 0 L4.5 8 Z" fill="#808080"/></svg><svg class="r" style="left:540px;top:84px" width="14" height="14" viewBox="0 0 14 14"><path d="M5.44 5.44 L4.17 1.34 L1.34 4.17 Z M8.56 5.44 L12.66 4.17 L9.83 1.34 Z M5.44 8.56 L1.34 9.83 L4.17 12.66 Z M8.56 8.56 L9.83 12.66 L12.66 9.83 Z " fill="#d0d0d0" stroke="#d0d0d0" stroke-width="1.1" stroke-linejoin="round"/></svg><div class="t" style="left:580px;top:84.69px;font-size:12.5px;color:#d2d2d2;letter-spacing:0.2px;-webkit-text-stroke:0.4px #d2d2d2;">Rect Transform</div><svg class="r" style="left:945.5px;top:85.7px" width="11" height="11" viewBox="0 0 11 11"><circle cx="5.5" cy="5.5" r="5" fill="#c4c4c4"/><path d="M3.7 4.3 Q3.8 2.5 5.5 2.5 Q7.3 2.5 7.3 4.1 Q7.3 5.1 6.2 5.6 Q5.6 5.9 5.6 6.7" fill="none" stroke="#3e3e3e" stroke-width="1.4"/><rect x="4.9" y="7.6" width="1.4" height="1.4" fill="#3e3e3e"/></svg><svg class="r" style="left:965px;top:85.5px" width="13" height="12" viewBox="0 0 13 12"><path d="M1 2.8 H7 M10.5 2.8 H11.5 M1 7.9 H2.5 M6 7.9 H11.5" stroke="#c4c4c4" stroke-width="1.4"/><rect x="7.2" y="0.5" width="2.8" height="4.6" fill="#c4c4c4"/><rect x="3" y="5.9" width="2.6" height="4.6" fill="#c4c4c4"/></svg><div class="r" style="left:989.8px;top:86.0px;width:2.3px;height:2.3px;background:#c4c4c4;"></div><div class="r" style="left:989.8px;top:89.9px;width:2.3px;height:2.3px;background:#c4c4c4;"></div><div class="r" style="left:989.8px;top:93.8px;width:2.3px;height:2.3px;background:#c4c4c4;"></div><div class="t" style="left:545px;top:111.95px;font-size:11.1px;color:#c4c4c4;">custom</div><div class="t" style="left:0px;top:-9.86px;font-size:10.9px;color:#c4c4c4;left:527.5px;top:166px;transform-origin:0 0;transform:rotate(-90deg)">custom</div><div class="r" style="left:540px;top:125px;width:46px;height:46px;background:#353535;"></div><div class="r" style="left:546px;top:130px;width:35px;height:35px;background:transparent;border:1px solid #6e6e6e;box-sizing:border-box"></div><div class="r" style="left:555px;top:139px;width:17px;height:17px;background:transparent;border:1px solid #a0a0a0;box-sizing:border-box"></div><div class="t" style="left:716px;top:110.69px;font-size:12.5px;color:#c4c4c4;">Left</div><div class="r" style="left:715px;top:126px;width:92px;height:16px;background:#2a2a2a;border:1px solid #212121;border-radius:3px"></div><div class="t" style="left:718px;top:128.69px;font-size:12.5px;color:#d2d2d2;">0</div><div class="t" style="left:811px;top:110.69px;font-size:12.5px;color:#7baefa;">Top</div><div class="r" style="left:810px;top:126px;width:92px;height:16px;background:#2a2a2a;border:1px solid #3a79bb;border-radius:3px"></div><div class="t" style="left:813px;top:128.69px;font-size:12.5px;color:#d2d2d2;">0</div><div class="t" style="left:907px;top:110.69px;font-size:12.5px;color:#c4c4c4;">Pos Z</div><div class="r" style="left:906px;top:126px;width:92px;height:16px;background:#2a2a2a;border:1px solid #212121;border-radius:3px"></div><div class="t" style="left:909px;top:128.69px;font-size:12.5px;color:#d2d2d2;">0</div><div class="r" style="left:823px;top:130px;width:1px;height:11px;background:#d2d2d2;"></div><div class="t" style="left:716px;top:146.69px;font-size:12.5px;color:#c4c4c4;">Right</div><div class="r" style="left:715px;top:162px;width:92px;height:16px;background:#2a2a2a;border:1px solid #212121;border-radius:3px"></div><div class="t" style="left:718px;top:164.69px;font-size:12.5px;color:#d2d2d2;">0</div><div class="t" style="left:811px;top:146.69px;font-size:12.5px;color:#c4c4c4;">Bottom</div><div class="r" style="left:810px;top:162px;width:92px;height:16px;background:#2a2a2a;border:1px solid #212121;border-radius:3px"></div><div class="t" style="left:813px;top:164.69px;font-size:12.5px;color:#d2d2d2;">0</div><div class="r" style="left:948px;top:160px;width:51px;height:19px;background:#303030;border:1px solid #262626;box-sizing:border-box;border-radius:3px"></div><div class="r" style="left:973px;top:162px;width:25px;height:16px;background:#585858;border-radius:0 2px 2px 0"></div><div class="r" style="left:956px;top:165px;width:10px;height:10px;background:transparent;border:1px dashed #c4c4c4;box-sizing:border-box"></div><div class="t" style="left:981px;top:164.59px;font-size:11.5px;color:#9a9a9a;">R</div><svg class="r" style="left:525.5px;top:188.0px" width="9" height="8"><path d="M0 0 L9 0 L4.5 8 Z" fill="#808080"/></svg><div class="t" style="left:539px;top:184.69px;font-size:12.5px;color:#c4c4c4;">Anchors</div><div class="t" style="left:553px;top:202.69px;font-size:12.5px;color:#c4c4c4;">Min</div><div class="t" style="left:553px;top:222.69px;font-size:12.5px;color:#c4c4c4;">Max</div><div class="t" style="left:538px;top:244.69px;font-size:12.5px;color:#c4c4c4;">Pivot</div><div class="t" style="left:716px;top:203.29px;font-size:12.5px;color:#c4c4c4;">X</div><div class="r" style="left:727.5px;top:200px;width:79px;height:16px;background:#2a2a2a;border:1px solid #212121;border-radius:3px"></div><div class="t" style="left:730.5px;top:202.69px;font-size:12.5px;color:#d2d2d2;">0.5</div><div class="t" style="left:811px;top:203.29px;font-size:12.5px;color:#c4c4c4;">Y</div><div class="r" style="left:823px;top:200px;width:79px;height:16px;background:#2a2a2a;border:1px solid #212121;border-radius:3px"></div><div class="t" style="left:826px;top:202.69px;font-size:12.5px;color:#d2d2d2;">0.5</div><div class="t" style="left:716px;top:223.29px;font-size:12.5px;color:#c4c4c4;">X</div><div class="r" style="left:727.5px;top:220px;width:79px;height:16px;background:#2a2a2a;border:1px solid #212121;border-radius:3px"></div><div class="t" style="left:730.5px;top:222.69px;font-size:12.5px;color:#d2d2d2;">0.535</div><div class="t" style="left:811px;top:223.29px;font-size:12.5px;color:#c4c4c4;">Y</div><div class="r" style="left:823px;top:220px;width:79px;height:16px;background:#2a2a2a;border:1px solid #212121;border-radius:3px"></div><div class="t" style="left:826px;top:222.69px;font-size:12.5px;color:#d2d2d2;">0.538</div><div class="t" style="left:716px;top:245.29px;font-size:12.5px;color:#c4c4c4;">X</div><div class="r" style="left:727.5px;top:242px;width:79px;height:16px;background:#2a2a2a;border:1px solid #212121;border-radius:3px"></div><div class="t" style="left:730.5px;top:244.69px;font-size:12.5px;color:#d2d2d2;">0.5</div><div class="t" style="left:811px;top:245.29px;font-size:12.5px;color:#c4c4c4;">Y</div><div class="r" style="left:823px;top:242px;width:79px;height:16px;background:#2a2a2a;border:1px solid #212121;border-radius:3px"></div><div class="t" style="left:826px;top:244.69px;font-size:12.5px;color:#d2d2d2;">0.5</div><div class="t" style="left:538px;top:272.69px;font-size:12.5px;color:#c4c4c4;">Rotation</div><div class="t" style="left:538px;top:292.69px;font-size:12.5px;color:#c4c4c4;">Scale</div><div class="t" style="left:719px;top:273.29px;font-size:12.5px;color:#c4c4c4;">X</div><div class="r" style="left:730px;top:270px;width:77px;height:16px;background:#2a2a2a;border:1px solid #212121;border-radius:3px"></div><div class="t" style="left:733px;top:272.69px;font-size:12.5px;color:#d2d2d2;">0</div><div class="t" style="left:814px;top:273.29px;font-size:12.5px;color:#c4c4c4;">Y</div><div class="r" style="left:826px;top:270px;width:76px;height:16px;background:#2a2a2a;border:1px solid #212121;border-radius:3px"></div><div class="t" style="left:829px;top:272.69px;font-size:12.5px;color:#d2d2d2;">0</div><div class="t" style="left:910px;top:273.29px;font-size:12.5px;color:#c4c4c4;">Z</div><div class="r" style="left:922px;top:270px;width:76px;height:16px;background:#2a2a2a;border:1px solid #212121;border-radius:3px"></div><div class="t" style="left:925px;top:272.69px;font-size:12.5px;color:#d2d2d2;">0</div><div class="t" style="left:719px;top:293.29px;font-size:12.5px;color:#c4c4c4;">X</div><div class="r" style="left:730px;top:290px;width:77px;height:16px;background:#2a2a2a;border:1px solid #212121;border-radius:3px"></div><div class="t" style="left:733px;top:292.69px;font-size:12.5px;color:#d2d2d2;">1</div><div class="t" style="left:814px;top:293.29px;font-size:12.5px;color:#c4c4c4;">Y</div><div class="r" style="left:826px;top:290px;width:76px;height:16px;background:#2a2a2a;border:1px solid #212121;border-radius:3px"></div><div class="t" style="left:829px;top:292.69px;font-size:12.5px;color:#d2d2d2;">1</div><div class="t" style="left:910px;top:293.29px;font-size:12.5px;color:#c4c4c4;">Z</div><div class="r" style="left:922px;top:290px;width:76px;height:16px;background:#2a2a2a;border:1px solid #212121;border-radius:3px"></div><div class="t" style="left:925px;top:292.69px;font-size:12.5px;color:#d2d2d2;">1</div><div class="r" style="left:519px;top:317px;width:485px;height:1px;background:#1a1a1a;"></div><div class="r" style="left:519px;top:318px;width:485px;height:20px;background:#3e3e3e;"></div><div class="r" style="left:519px;top:338px;width:485px;height:1px;background:#303030;"></div><svg class="r" style="left:525.5px;top:325.0px" width="9" height="8"><path d="M0 0 L9 0 L4.5 8 Z" fill="#808080"/></svg><svg class="r" style="left:539px;top:322px" width="17" height="12" viewBox="0 0 17 12"><path d="M1 6 Q8.5 -2 16 6 Q8.5 14 1 6 Z" fill="none" stroke="#d0d0d0" stroke-width="1.3"/><circle cx="8.5" cy="6" r="2.6" fill="none" stroke="#d0d0d0" stroke-width="1.3"/></svg><div class="t" style="left:580px;top:321.69px;font-size:12.5px;color:#d2d2d2;letter-spacing:0.2px;-webkit-text-stroke:0.4px #d2d2d2;">Canvas Renderer</div><svg class="r" style="left:945.5px;top:322.7px" width="11" height="11" viewBox="0 0 11 11"><circle cx="5.5" cy="5.5" r="5" fill="#c4c4c4"/><path d="M3.7 4.3 Q3.8 2.5 5.5 2.5 Q7.3 2.5 7.3 4.1 Q7.3 5.1 6.2 5.6 Q5.6 5.9 5.6 6.7" fill="none" stroke="#3e3e3e" stroke-width="1.4"/><rect x="4.9" y="7.6" width="1.4" height="1.4" fill="#3e3e3e"/></svg><svg class="r" style="left:965px;top:322.5px" width="13" height="12" viewBox="0 0 13 12"><path d="M1 2.8 H7 M10.5 2.8 H11.5 M1 7.9 H2.5 M6 7.9 H11.5" stroke="#c4c4c4" stroke-width="1.4"/><rect x="7.2" y="0.5" width="2.8" height="4.6" fill="#c4c4c4"/><rect x="3" y="5.9" width="2.6" height="4.6" fill="#c4c4c4"/></svg><div class="r" style="left:989.8px;top:323.0px;width:2.3px;height:2.3px;background:#c4c4c4;"></div><div class="r" style="left:989.8px;top:326.9px;width:2.3px;height:2.3px;background:#c4c4c4;"></div><div class="r" style="left:989.8px;top:330.8px;width:2.3px;height:2.3px;background:#c4c4c4;"></div><div class="t" style="left:538px;top:345.69px;font-size:12.5px;color:#c4c4c4;">Cull Transparent Mesh</div><div class="r" style="left:718px;top:345px;width:12px;height:12px;background:#2a2a2a;border:1px solid #212121;border-radius:2px"></div><svg class="r" style="left:718px;top:345px" width="14" height="14" viewBox="0 0 14 14"><path d="M3.3 7.6 L5.6 10 L10.8 4.5" fill="none" stroke="#e6e6e6" stroke-width="1.6" stroke-linecap="round" stroke-linejoin="round"/></svg><div class="r" style="left:519px;top:370px;width:485px;height:1px;background:#1a1a1a;"></div><div class="r" style="left:519px;top:371px;width:485px;height:20px;background:#3e3e3e;"></div><div class="r" style="left:519px;top:391px;width:485px;height:1px;background:#303030;"></div><svg class="r" style="left:525.5px;top:378.0px" width="9" height="8"><path d="M0 0 L9 0 L4.5 8 Z" fill="#808080"/></svg><svg class="r" style="left:539px;top:373px" width="16" height="16" viewBox="0 0 16 16"><rect x="2.5" y="2.5" width="11" height="11" fill="none" stroke="#d0d0d0" stroke-width="1.2"/><rect x="0.5" y="0.5" width="3" height="3" fill="#d0d0d0"/><rect x="12.5" y="0.5" width="3" height="3" fill="#d0d0d0"/><rect x="0.5" y="12.5" width="3" height="3" fill="#d0d0d0"/><rect x="12.5" y="12.5" width="3" height="3" fill="#d0d0d0"/><path d="M4 12 L7 8 L9 10 L10.5 8.5 L12 12 Z" fill="#d0d0d0"/><circle cx="6" cy="6" r="1.2" fill="#d0d0d0"/></svg><div class="r" style="left:559px;top:374px;width:12px;height:12px;background:#2a2a2a;border:1px solid #212121;border-radius:2px"></div><svg class="r" style="left:559px;top:374px" width="14" height="14" viewBox="0 0 14 14"><path d="M3.3 7.6 L5.6 10 L10.8 4.5" fill="none" stroke="#e6e6e6" stroke-width="1.6" stroke-linecap="round" stroke-linejoin="round"/></svg><div class="t" style="left:580px;top:374.69px;font-size:12.5px;color:#d2d2d2;letter-spacing:0.2px;-webkit-text-stroke:0.4px #d2d2d2;">Image</div><svg class="r" style="left:945.5px;top:375.7px" width="11" height="11" viewBox="0 0 11 11"><circle cx="5.5" cy="5.5" r="5" fill="#c4c4c4"/><path d="M3.7 4.3 Q3.8 2.5 5.5 2.5 Q7.3 2.5 7.3 4.1 Q7.3 5.1 6.2 5.6 Q5.6 5.9 5.6 6.7" fill="none" stroke="#3e3e3e" stroke-width="1.4"/><rect x="4.9" y="7.6" width="1.4" height="1.4" fill="#3e3e3e"/></svg><svg class="r" style="left:965px;top:375.5px" width="13" height="12" viewBox="0 0 13 12"><path d="M1 2.8 H7 M10.5 2.8 H11.5 M1 7.9 H2.5 M6 7.9 H11.5" stroke="#c4c4c4" stroke-width="1.4"/><rect x="7.2" y="0.5" width="2.8" height="4.6" fill="#c4c4c4"/><rect x="3" y="5.9" width="2.6" height="4.6" fill="#c4c4c4"/></svg><div class="r" style="left:989.8px;top:376.0px;width:2.3px;height:2.3px;background:#c4c4c4;"></div><div class="r" style="left:989.8px;top:379.9px;width:2.3px;height:2.3px;background:#c4c4c4;"></div><div class="r" style="left:989.8px;top:383.8px;width:2.3px;height:2.3px;background:#c4c4c4;"></div><div class="t" style="left:538px;top:398.89px;font-size:12.5px;color:#c4c4c4;">Source Image</div><div class="r" style="left:718px;top:396px;width:280px;height:16px;background:#2a2a2a;border:1px solid #212121;border-radius:3px"></div><div class="t" style="left:721px;top:398.69px;font-size:12.5px;color:#d2d2d2;">None (Sprite)</div><div class="r" style="left:981px;top:397px;width:18px;height:16px;background:#2f2f2f;border-radius:0 2px 2px 0"></div><div class="r" style="left:981px;top:397px;width:1px;height:16px;background:#232323;"></div><svg class="r" style="left:984px;top:399px" width="12" height="12" viewBox="0 0 12 12"><circle cx="6" cy="6" r="4.6" fill="none" stroke="#c8c8c8" stroke-width="1.2"/><circle cx="6" cy="6" r="1.4" fill="#d0d0d0"/></svg><div class="t" style="left:538px;top:418.89px;font-size:12.5px;color:#c4c4c4;">Color</div><div class="r" style="left:718px;top:417px;width:263px;height:13px;background:#ffcc00;"></div><div class="r" style="left:718px;top:430px;width:263px;height:3px;background:#ffffff;"></div><div class="r" style="left:981px;top:416px;width:19px;height:18px;background:#333333;border:1px solid #262626;box-sizing:border-box;border-radius:0 3px 3px 0"></div><svg class="r" style="left:984px;top:418px" width="14" height="14" viewBox="0 0 14 14"><path d="M2.6 11.6 L8.2 6" stroke="#c8c8c8" stroke-width="2.4" stroke-linecap="round"/><path d="M6.8 4.4 L9.8 7.4" stroke="#c8c8c8" stroke-width="1.8" stroke-linecap="round"/><path d="M8.6 5.6 L11.2 3" stroke="#c8c8c8" stroke-width="2.6" stroke-linecap="round"/></svg><div class="t" style="left:538px;top:438.69px;font-size:12.5px;color:#c4c4c4;">Material</div><div class="r" style="left:718px;top:436px;width:280px;height:16px;background:#2a2a2a;border:1px solid #212121;border-radius:3px"></div><div class="t" style="left:721px;top:438.69px;font-size:12.5px;color:#d2d2d2;">None (Material)</div><div class="r" style="left:981px;top:437px;width:18px;height:16px;background:#2f2f2f;border-radius:0 2px 2px 0"></div><div class="r" style="left:981px;top:437px;width:1px;height:16px;background:#232323;"></div><svg class="r" style="left:984px;top:439px" width="12" height="12" viewBox="0 0 12 12"><circle cx="6" cy="6" r="4.6" fill="none" stroke="#c8c8c8" stroke-width="1.2"/><circle cx="6" cy="6" r="1.4" fill="#d0d0d0"/></svg><div class="t" style="left:538px;top:458.69px;font-size:12.5px;color:#c4c4c4;">Raycast Target</div><div class="r" style="left:718px;top:457px;width:12px;height:12px;background:#2a2a2a;border:1px solid #212121;border-radius:2px"></div><svg class="r" style="left:718px;top:457px" width="14" height="14" viewBox="0 0 14 14"><path d="M3.3 7.6 L5.6 10 L10.8 4.5" fill="none" stroke="#e6e6e6" stroke-width="1.6" stroke-linecap="round" stroke-linejoin="round"/></svg><svg class="r" style="left:527.0px;top:480.5px" width="6" height="9"><path d="M0 0 L6 4.5 L0 9 Z" fill="#808080"/></svg><div class="t" style="left:538px;top:478.69px;font-size:12.5px;color:#c4c4c4;">Raycast Padding</div><div class="t" style="left:538px;top:498.69px;font-size:12.5px;color:#c4c4c4;">Maskable</div><div class="r" style="left:718px;top:498px;width:12px;height:12px;background:#2a2a2a;border:1px solid #212121;border-radius:2px"></div><svg class="r" style="left:718px;top:498px" width="14" height="14" viewBox="0 0 14 14"><path d="M3.3 7.6 L5.6 10 L10.8 4.5" fill="none" stroke="#e6e6e6" stroke-width="1.6" stroke-linecap="round" stroke-linejoin="round"/></svg></div>
</body></html>
